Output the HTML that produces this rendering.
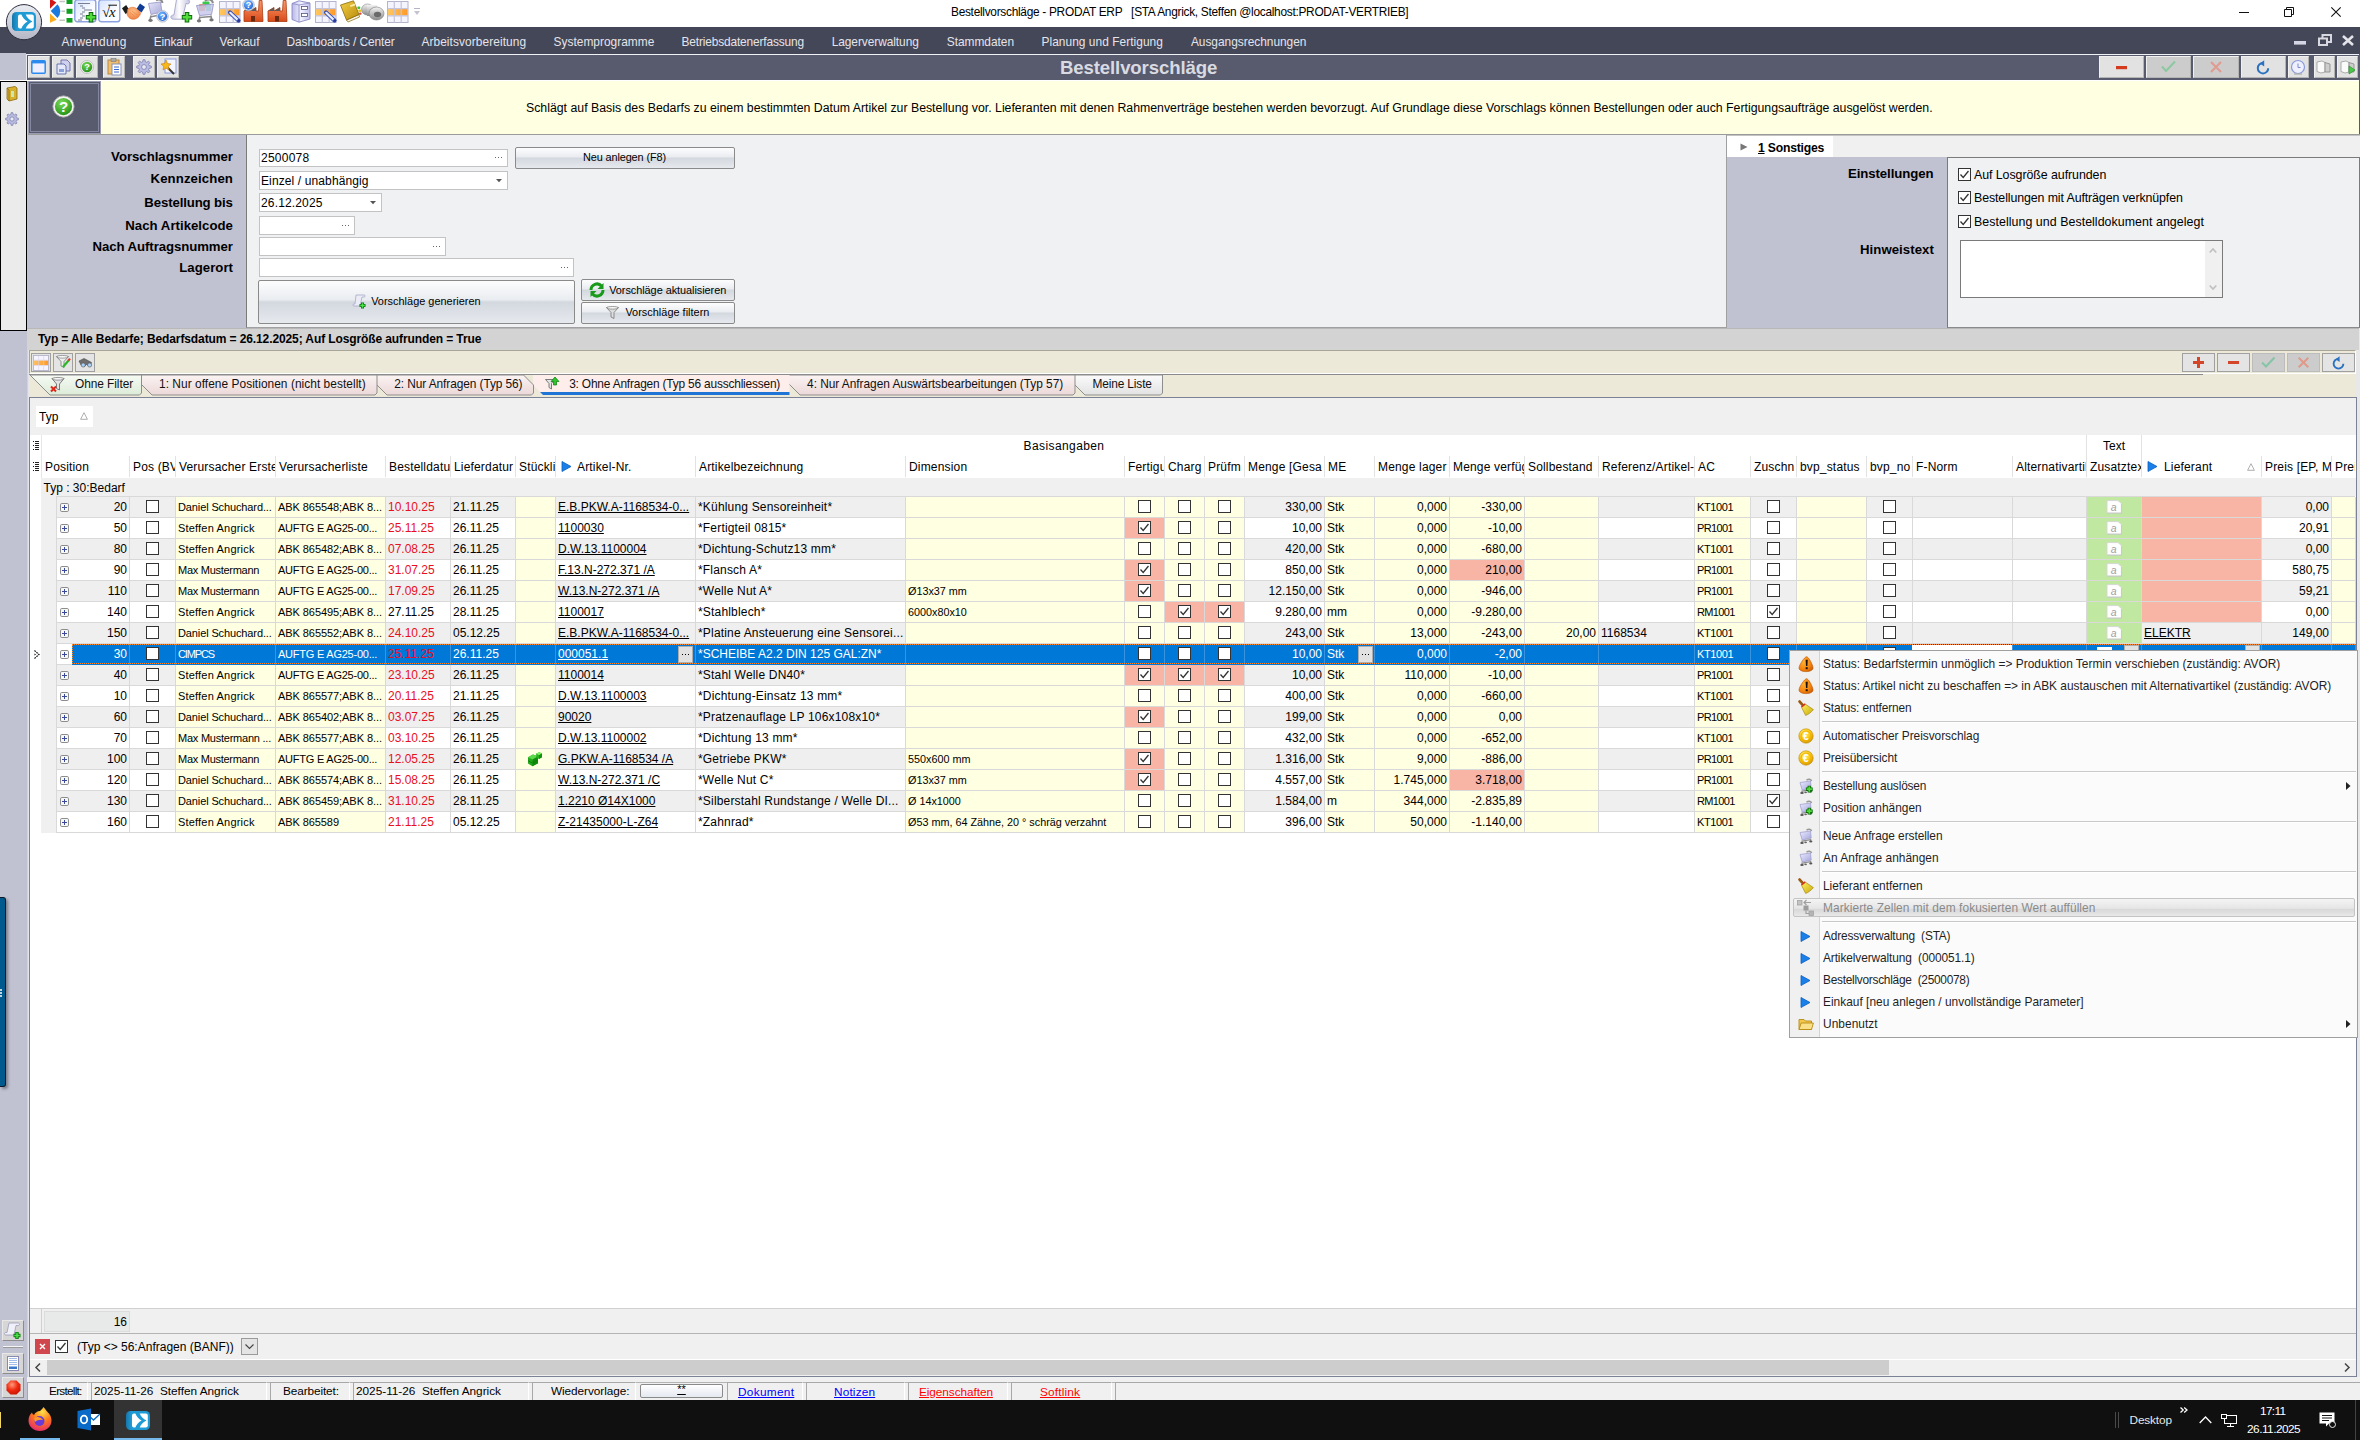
<!DOCTYPE html>
<html lang="de"><head><meta charset="utf-8"><title>Bestellvorschläge - PRODAT ERP</title>
<style>
html,body{margin:0;padding:0}
body{width:2360px;height:1440px;position:relative;overflow:hidden;background:#fff;
 font-family:"Liberation Sans",sans-serif;font-size:12px;color:#000}
body div{position:absolute;box-sizing:border-box;white-space:pre}
svg{position:absolute;overflow:visible}
.b{font-weight:bold}
.r{text-align:right}
.c{text-align:center}
.u{text-decoration:underline}
.mi{color:#e4e4ea;font-size:12.4px;height:27px;line-height:27px;top:28px}
.lbl{font-weight:bold;font-size:13.4px;text-align:right;height:20px;line-height:20px}
.inp{background:#fff;border:1px solid #c3c3c3;font-size:12px;line-height:16px;padding-left:2px}
.btn{border:1px solid #8a8a8a;border-radius:2px;background:linear-gradient(#fdfdfe 0%,#e9ecf0 45%,#d3d8df 50%,#e6e9ee 100%);font-size:11.4px;text-align:center}
.tb{background:#e2e2e2;border:1px solid #f0f0f0;border-right-color:#b4b4b4;border-bottom-color:#b4b4b4}
.tb2{background:#e4e4e4;border:1px solid #a0a0a0}
.hd{font-size:12px;letter-spacing:0.17px;height:21px;line-height:22px;top:456px;overflow:hidden;border-left:1px solid #e2e2e2;padding-left:3px;background:#fff}
.cell{height:21px;line-height:20px;overflow:hidden;border-right:1px solid #d9d9d9;border-bottom:1px solid #d9d9d9;font-size:12px;padding:0 2px 0 2px}
.sm{font-size:11px}
.cb{width:13px;height:13px;border:1px solid #333;background:#fff}
.mt{font-size:12.2px;color:#1f1f1f;height:22px;line-height:22px;left:1823px}
.sep{left:1822px;width:534px;height:1px;background:#c9c9c9;border-bottom:1px solid #fff;height:2px}
.st{font-size:11.6px;height:18px;line-height:18px;top:1382px}
.bz{letter-spacing:0.18px}
.dm{font-size:10.8px}

</style></head>
<body>
<div style="left:0px;top:0px;width:2360px;height:27px;background:#fff"></div>
<div style="left:951px;top:2.8px;height:18px;line-height:18px;font-size:11.9px;letter-spacing:-0.289px;">Bestellvorschläge - PRODAT ERP   [STA Angrick, Steffen @localhost:PRODAT-VERTRIEB]</div>
<svg style="left:2239px;top:12px" width="10" height="1" viewBox="0 0 10 1"><rect width="10" height="1" fill="#111"/></svg>
<svg style="left:2284px;top:7px" width="10" height="10" viewBox="0 0 10 10"><path d="M0.5 2.5 H7.5 V9.5 H0.5 Z M2.5 2.5 V0.5 H9.5 V7.5 H7.5" fill="none" stroke="#111" stroke-width="1"/></svg>
<svg style="left:2331px;top:7px" width="10" height="10" viewBox="0 0 10 10"><path d="M0.3 0.3 L9.7 9.7 M9.7 0.3 L0.3 9.7" stroke="#111" stroke-width="1.1"/></svg>
<svg style="left:50px;top:0px" width="23" height="23" viewBox="0 0 23 23"><path d="M0 -1.5 L6.3 2.4 L0 8.7 Z" fill="#d41818"/><path d="M0.7 11.1 L7.49 4.31 A9.6 9.6 0 0 1 7.49 17.89 Z" fill="#1a7ade"/><path d="M0 13.5 L6.6 19.8 L0 22.7 Z" fill="#ffab1e"/><path d="M9.5 1.5H15M11.5 11.2H15M9.5 20.3H15" stroke="#c4c4c4" stroke-width="1.6"/><rect x="16.5" y="-1" width="6" height="5" fill="#10a020"/><rect x="16.5" y="8.8" width="6" height="5" fill="#10a020"/><rect x="16.5" y="18" width="6" height="4.6" fill="#10a020"/></svg>
<svg style="left:74px;top:-1px" width="23" height="24" viewBox="0 0 23 24"><defs><linearGradient id="lb1" x1="0" y1="0" x2="1" y2="1"><stop offset="0" stop-color="#d4e2ff"/><stop offset="0.6" stop-color="#fafcff"/></linearGradient></defs><rect x="0.8" y="0.8" width="21" height="22" rx="2.5" fill="url(#lb1)" stroke="#8ea2e2" stroke-width="1.4"/><path d="M4 4.5H16M6 7H9M8 9H11M10 11H18M8 13H11M6 15H9M8 17H11M6 19H9M4 21H8" stroke="#6a7088" stroke-width="0.9"/><path d="M17 13.100000000000001V23.5M11.8 18.3H22.2" stroke="#0b6b0b" stroke-width="4.6"/><path d="M17 14.0V22.6M12.7 18.3H21.3" stroke="#52dc3c" stroke-width="2.6"/></svg>
<svg style="left:98px;top:-1px" width="23" height="24" viewBox="0 0 23 24"><rect x="0.8" y="0.8" width="21" height="22" rx="2.5" fill="url(#lb1)" stroke="#8ea2e2" stroke-width="1.4"/><text x="4" y="18" font-size="15" font-family="Liberation Serif,serif" fill="#111">√</text><text x="11" y="18" font-size="15" font-style="italic" font-family="Liberation Serif,serif" fill="#111">x</text><path d="M10.3 6.2H19" stroke="#111" stroke-width="1"/></svg>
<svg style="left:121px;top:3px" width="25" height="18" viewBox="0 0 25 18"><defs><radialGradient id="hs1" cx="0.45" cy="0.35" r="0.7"><stop offset="0" stop-color="#ffc08a"/><stop offset="1" stop-color="#ee7a3a"/></radialGradient></defs><path d="M1 5.2 L5.2 2 L9 8 L4.6 11 Z" fill="#1c1c1c"/><path d="M24 4 L19 0.6 L15.4 6 L20.6 9.6 Z" fill="#123c94"/><path d="M6.5 6.5 C9 3.5 13 3.8 15.5 5.5 L19.5 9.5 C20 12 17 15.5 13.5 16.2 C10 17 7 14.5 6 11.5 Z" fill="url(#hs1)" stroke="#d86a2a" stroke-width="0.5"/><path d="M9 9.5 L14 13.5 M11 8 L16 12" stroke="#e88848" stroke-width="0.8"/></svg>
<svg style="left:147px;top:-1px" width="24" height="24" viewBox="0 0 24 24"><defs><linearGradient id="ct1" x1="0" y1="0" x2="1" y2="1"><stop offset="0" stop-color="#e6e6fa"/><stop offset="1" stop-color="#a8a8d8"/></linearGradient><radialGradient id="qb1" cx="0.4" cy="0.3" r="0.8"><stop offset="0" stop-color="#7ab8ff"/><stop offset="1" stop-color="#1a62d0"/></radialGradient></defs><path d="M9 1.5 C12 -0.5 15 0.5 15.5 4" fill="none" stroke="#8c8c8c" stroke-width="2"/><path d="M1.5 4.5 L13.5 3 L15 13 L4 15.5 Z" fill="url(#ct1)" stroke="#9494c4" stroke-width="0.8"/><path d="M4 16.5 L3 21 M13 15 L12.5 19.5 M4 17.8 L13 16" stroke="#8a8a8a" stroke-width="1.6"/><ellipse cx="3.5" cy="21.5" rx="2.2" ry="1.4" fill="#777"/><circle cx="15.5" cy="17.3" r="5.8" fill="#dfe6f4" stroke="#a8acb8" stroke-width="0.7"/><circle cx="15.5" cy="17.3" r="4.7" fill="url(#qb1)"/><text x="15.5" y="20.6" font-size="9" font-weight="bold" fill="#fff" text-anchor="middle" font-family="Liberation Sans,sans-serif">?</text></svg>
<svg style="left:170px;top:-1px" width="24" height="24" viewBox="0 0 24 24"><defs><linearGradient id="sc1" x1="0" y1="0" x2="1" y2="0"><stop offset="0" stop-color="#c8c8e4"/><stop offset="0.45" stop-color="#ffffff"/><stop offset="1" stop-color="#c4c4e0"/></linearGradient></defs><path d="M6.5 0.5 H17 C19.5 0.5 20.5 3 18.8 4.5 C17.8 5.3 16.5 5 16.2 4 L13 16.5 C15 16.5 15.5 19.5 13 20.2 H3.5 C0.5 20.2 0 16.8 2.5 16.2 L4 15.8 Z" fill="url(#sc1)" stroke="#a4a4c8" stroke-width="0.9"/><path d="M17 13.100000000000001V23.5M11.8 18.3H22.2" stroke="#0b6b0b" stroke-width="4.6"/><path d="M17 14.0V22.6M12.7 18.3H21.3" stroke="#52dc3c" stroke-width="2.6"/></svg>
<svg style="left:195px;top:-1px" width="22" height="24" viewBox="0 0 22 24"><path d="M10 2 C13 -0.5 17 0 18 4" fill="none" stroke="#8c8c8c" stroke-width="2"/><rect x="7.5" y="2.5" width="7" height="6" rx="1" fill="#3cc84a"/><rect x="4" y="5" width="6" height="7" rx="1" fill="#f49a6a"/><rect x="11" y="5" width="5" height="7" fill="#7ad4b0"/><path d="M1.5 6.5 L18.5 5 L16.5 15.5 L4.5 16.5 Z" fill="#c4c4ea" fill-opacity="0.78" stroke="#9090c0" stroke-width="0.8"/><path d="M5 17.5 L4 21.5 M16 16.5 L16.5 20.5 M5 18.5 L16 17.5" stroke="#8a8a8a" stroke-width="1.7"/><ellipse cx="4" cy="22" rx="2.2" ry="1.4" fill="#777"/><ellipse cx="16.5" cy="21" rx="2.2" ry="1.4" fill="#777"/></svg>
<svg style="left:219px;top:1px" width="22" height="23" viewBox="0 0 22 23"><defs><linearGradient id="go219" x1="0" y1="0" x2="1" y2="0"><stop offset="0" stop-color="#ffc860"/><stop offset="1" stop-color="#ff9a28"/></linearGradient></defs><rect x="0.5" y="0.5" width="20.5" height="21" fill="#f4f4ff" stroke="#b4b4cc"/><rect x="1" y="8" width="19.5" height="6.5" fill="url(#go219)"/><path d="M7.3 0.5V21.5M14.2 0.5V21.5M0.5 7.6H21M0.5 14.8H21" stroke="#c4c4dc" stroke-width="1.2"/><path d="M11 11.5 L19.5 19.5" stroke="#3a52b8" stroke-width="4.2" stroke-linecap="round"/><path d="M11.3 11.8 L18.5 18.6" stroke="#e8eeff" stroke-width="2.2" stroke-linecap="round"/><circle cx="19.6" cy="19.6" r="1.5" fill="#2a3a9a"/></svg>
<svg style="left:242px;top:-1px" width="23" height="24" viewBox="0 0 23 24"><defs><linearGradient id="fc1" x1="0" y1="0" x2="0" y2="1"><stop offset="0" stop-color="#ff9a6a"/><stop offset="1" stop-color="#d84a1a"/></linearGradient></defs><path d="M2 22.5 V12 L8 8.5 V12 L14 8.5 V12 H16.5 L17.2 1.5 H20 L21 22.5 Z" fill="url(#fc1)" stroke="#a83a12" stroke-width="0.8"/><path d="M2 12 L8 8.5 L8 12 L14 8.5 L14 12 Z" fill="#5a5a5a"/><rect x="9" y="17" width="4" height="5.5" fill="#6a2a10"/><circle cx="6.5" cy="6" r="5.8" fill="#dfe6f4" stroke="#a8acb8" stroke-width="0.7"/><circle cx="6.5" cy="6" r="4.7" fill="url(#qb1)"/><text x="6.5" y="9.3" font-size="9" font-weight="bold" fill="#fff" text-anchor="middle" font-family="Liberation Sans,sans-serif">?</text></svg>
<svg style="left:266px;top:-1px" width="23" height="24" viewBox="0 0 23 24"><defs><linearGradient id="fc2" x1="0" y1="0" x2="0" y2="1"><stop offset="0" stop-color="#ff9a6a"/><stop offset="1" stop-color="#d84a1a"/></linearGradient></defs><path d="M2 22.5 V12 L8 8.5 V12 L14 8.5 V12 H16.5 L17.2 1.5 H20 L21 22.5 Z" fill="url(#fc2)" stroke="#a83a12" stroke-width="0.8"/><path d="M2 12 L8 8.5 L8 12 L14 8.5 L14 12 Z" fill="#5a5a5a"/><rect x="9" y="17" width="4" height="5.5" fill="#6a2a10"/></svg>
<svg style="left:291px;top:0px" width="21" height="23" viewBox="0 0 21 23"><defs><linearGradient id="cb1" x1="0" y1="0" x2="1" y2="0"><stop offset="0" stop-color="#b8b8e8"/><stop offset="0.5" stop-color="#f2f2ff"/><stop offset="1" stop-color="#c0c0ec"/></linearGradient></defs><path d="M1 3.5 L8 0.8 L19 3 V19 L8 22.2 L1 19.5 Z" fill="url(#cb1)" stroke="#8a8ac4" stroke-width="0.9"/><path d="M8 5 V22" stroke="#8a8ac4" stroke-width="0.8"/><path d="M1 3.5 L8 5 L19 3" fill="none" stroke="#8a8ac4" stroke-width="0.8"/><rect x="10.5" y="6.5" width="6" height="3" fill="#fff" stroke="#55557a" stroke-width="0.8"/><rect x="10.5" y="13.5" width="6" height="3" fill="#fff" stroke="#55557a" stroke-width="0.8"/></svg>
<svg style="left:315px;top:1px" width="22" height="23" viewBox="0 0 22 23"><defs><linearGradient id="go315" x1="0" y1="0" x2="1" y2="0"><stop offset="0" stop-color="#ffc860"/><stop offset="1" stop-color="#ff9a28"/></linearGradient></defs><rect x="0.5" y="0.5" width="20.5" height="21" fill="#f4f4ff" stroke="#b4b4cc"/><rect x="1" y="8" width="19.5" height="6.5" fill="url(#go315)"/><path d="M7.3 0.5V21.5M14.2 0.5V21.5M0.5 7.6H21M0.5 14.8H21" stroke="#c4c4dc" stroke-width="1.2"/><path d="M11 11.5 L19.5 19.5" stroke="#3a52b8" stroke-width="4.2" stroke-linecap="round"/><path d="M11.3 11.8 L18.5 18.6" stroke="#e8eeff" stroke-width="2.2" stroke-linecap="round"/><circle cx="19.6" cy="19.6" r="1.5" fill="#2a3a9a"/></svg>
<svg style="left:338px;top:0px" width="23" height="23" viewBox="0 0 23 23"><defs><linearGradient id="bk1" x1="0" y1="0" x2="1" y2="1"><stop offset="0" stop-color="#f4d048"/><stop offset="1" stop-color="#b88a08"/></linearGradient></defs><path d="M8.5 20 L10 22 L21.5 17 L21 14.5 Z" fill="#f8f4e0" stroke="#8a6a08" stroke-width="0.7"/><path d="M2.5 5 L15.5 0.8 L21 14.5 L8.5 20 Z" fill="url(#bk1)" stroke="#8a6a08" stroke-width="0.8"/><rect x="12" y="4.5" width="5" height="2" fill="#f8e8a0" transform="rotate(-18 14 5)"/><rect x="19.3" y="6.5" width="3" height="2.4" rx="1" fill="#3cc43c"/><rect x="20.2" y="9.6" width="3" height="2.4" rx="1" fill="#e8c020"/><rect x="21" y="12.6" width="2.6" height="2.2" rx="1" fill="#e04a3a"/></svg>
<svg style="left:361px;top:2px" width="24" height="20" viewBox="0 0 24 20"><defs><linearGradient id="pp1" x1="0" y1="0" x2="0" y2="1"><stop offset="0" stop-color="#f4f4f4"/><stop offset="1" stop-color="#8a8a8a"/></linearGradient></defs><ellipse cx="6.5" cy="7.5" rx="6" ry="5.5" fill="url(#pp1)" stroke="#8a8a8a" stroke-width="0.6"/><rect x="6" y="3" width="10" height="11" fill="url(#pp1)"/><ellipse cx="15.5" cy="11.5" rx="7.5" ry="6.5" fill="url(#pp1)" stroke="#7a7a7a" stroke-width="0.6"/><ellipse cx="16.5" cy="12.5" rx="3.6" ry="2.8" fill="#6a6a6a"/></svg>
<svg style="left:387px;top:1px" width="22" height="23" viewBox="0 0 22 23"><defs><linearGradient id="go387" x1="0" y1="0" x2="1" y2="0"><stop offset="0" stop-color="#ffc860"/><stop offset="1" stop-color="#ff9a28"/></linearGradient></defs><rect x="0.5" y="0.5" width="20.5" height="21" fill="#f4f4ff" stroke="#b4b4cc"/><rect x="1" y="8" width="19.5" height="6.5" fill="url(#go387)"/><path d="M7.3 0.5V21.5M14.2 0.5V21.5M0.5 7.6H21M0.5 14.8H21" stroke="#c4c4dc" stroke-width="1.2"/></svg>
<svg style="left:414px;top:8px" width="6" height="8" viewBox="0 0 6 8"><path d="M0 0.5H6" stroke="#b4b4c4"/><path d="M0 3 H6 L3 7 Z" fill="#c4c4d0"/></svg>
<div style="left:0px;top:27px;width:2360px;height:27px;background:#444757"></div>
<div style="left:61.5px;top:32.5px;height:18px;line-height:18px;font-size:11.9px;letter-spacing:0.242px;color:#e4e4ea;">Anwendung</div>
<div style="left:153.7px;top:32.5px;height:18px;line-height:18px;font-size:11.9px;letter-spacing:-0.166px;color:#e4e4ea;">Einkauf</div>
<div style="left:219.5px;top:32.5px;height:18px;line-height:18px;font-size:11.9px;letter-spacing:-0.059px;color:#e4e4ea;">Verkauf</div>
<div style="left:286.5px;top:32.5px;height:18px;line-height:18px;font-size:11.9px;letter-spacing:-0.084px;color:#e4e4ea;">Dashboards / Center</div>
<div style="left:421.4px;top:32.5px;height:18px;line-height:18px;font-size:11.9px;letter-spacing:0.089px;color:#e4e4ea;">Arbeitsvorbereitung</div>
<div style="left:553.6px;top:32.5px;height:18px;line-height:18px;font-size:11.9px;letter-spacing:0.020px;color:#e4e4ea;">Systemprogramme</div>
<div style="left:681.5px;top:32.5px;height:18px;line-height:18px;font-size:11.9px;letter-spacing:-0.143px;color:#e4e4ea;">Betriebsdatenerfassung</div>
<div style="left:831.7px;top:32.5px;height:18px;line-height:18px;font-size:11.9px;letter-spacing:-0.056px;color:#e4e4ea;">Lagerverwaltung</div>
<div style="left:946.8px;top:32.5px;height:18px;line-height:18px;font-size:11.9px;letter-spacing:-0.019px;color:#e4e4ea;">Stammdaten</div>
<div style="left:1041.5px;top:32.5px;height:18px;line-height:18px;font-size:11.9px;letter-spacing:0.054px;color:#e4e4ea;">Planung und Fertigung</div>
<div style="left:1190.9px;top:32.5px;height:18px;line-height:18px;font-size:11.9px;letter-spacing:-0.011px;color:#e4e4ea;">Ausgangsrechnungen</div>
<svg style="left:2294px;top:41px" width="12" height="4" viewBox="0 0 12 4"><rect width="12" height="3.6" fill="#d4d6e4"/></svg>
<svg style="left:2318px;top:34px" width="14" height="12" viewBox="0 0 14 12"><path d="M1 4.5 H9 V11 H1 Z" fill="none" stroke="#d8d8e0" stroke-width="2"/><path d="M4.5 4 V1 H13 V8 H9.5" fill="none" stroke="#d8d8e0" stroke-width="2"/></svg>
<svg style="left:2342px;top:35px" width="12" height="11" viewBox="0 0 12 11"><path d="M1 1 L11 10 M11 1 L1 10" stroke="#e4e4ea" stroke-width="2.6"/></svg>
<svg style="left:5px;top:3px" width="40" height="40" viewBox="0 0 40 40"><defs><linearGradient id="orb" x1="0" y1="0" x2="0" y2="1"><stop offset="0" stop-color="#eceef4"/><stop offset="0.5" stop-color="#cfd1dc"/><stop offset="1" stop-color="#b4b6c6"/></linearGradient><linearGradient id="orl" x1="0" y1="0" x2="1" y2="0"><stop offset="0" stop-color="#1874a8"/><stop offset="0.22" stop-color="#1e9ad4"/></linearGradient></defs><circle cx="19" cy="19.2" r="17.6" fill="url(#orb)" stroke="#2c2e3c" stroke-width="1"/><rect x="7" y="9" width="24" height="19" rx="4.5" fill="url(#orl)"/><rect x="13" y="11.6" width="15.8" height="13.8" rx="2" fill="#fff"/><path d="M16.2 11 H20.6 C21.5 14.5 24.5 17 27.5 18.5 C24.5 20 21.5 22.5 20.6 26 H16.2 C17.4 22.3 19.8 20 22.6 18.5 C19.8 17 17.4 14.7 16.2 11 Z" fill="#1e9ad4"/></svg>
<div style="left:0px;top:54px;width:2360px;height:26px;background:#585b6d;border-top:1px solid #f0f0f6"></div>
<div style="left:0px;top:53px;width:26px;height:27px;background:#c0c1d1"></div>
<div style="left:26px;top:54px;width:1px;height:26px;background:#e8e8ee"></div>
<div class="tb" style="left:28px;top:56px;width:22px;height:22px;"></div>
<div class="tb" style="left:52px;top:56px;width:22px;height:22px;"></div>
<div class="tb" style="left:76px;top:56px;width:22px;height:22px;"></div>
<div class="tb" style="left:103px;top:56px;width:22px;height:22px;"></div>
<div class="tb" style="left:133px;top:56px;width:22px;height:22px;"></div>
<div class="tb" style="left:157px;top:56px;width:22px;height:22px;"></div>
<svg style="left:31px;top:60px" width="15" height="14" viewBox="0 0 15 14"><rect x="0.8" y="0.8" width="13.4" height="12.4" rx="1" fill="#eef" stroke="#2a8af0" stroke-width="1.5"/><rect x="1" y="1" width="13" height="2.4" fill="#2a8af0"/></svg>
<svg style="left:56px;top:59px" width="15" height="16" viewBox="0 0 15 16"><path d="M5 1 H11 L14 4 V12 H5 Z" fill="#cfcfee" stroke="#6a6aa8" stroke-width="0.9"/><path d="M1 5 H8 L10 7 V15 H1 Z" fill="#e4e8f8" stroke="#5a6aa8" stroke-width="0.9"/><rect x="3" y="10" width="5" height="3" fill="#8aa0d8"/></svg>
<svg style="left:80px;top:60px" width="14" height="14" viewBox="0 0 16 16"><defs><radialGradient id="gh620" cx="0.4" cy="0.3" r="0.8"><stop offset="0" stop-color="#7ddc5a"/><stop offset="1" stop-color="#1d8a12"/></radialGradient></defs><circle cx="8" cy="8" r="7.4" fill="#f4f4f4" stroke="#9a9a9a" stroke-width="0.6"/><circle cx="8" cy="8" r="6" fill="url(#gh620)"/><text x="8" y="11.6" font-size="10.5" font-weight="bold" fill="#fff" text-anchor="middle" font-family="Liberation Sans,sans-serif">?</text></svg>
<svg style="left:107px;top:58px" width="15" height="18" viewBox="0 0 15 18"><rect x="1" y="2" width="11" height="14" fill="#f0c070" stroke="#b8863a"/><rect x="4" y="0.5" width="5" height="3" fill="#aaa" stroke="#777" stroke-width="0.6"/><rect x="5" y="6" width="9" height="11" fill="#fff" stroke="#8890b0"/><path d="M7 9H12M7 11.5H12M7 14H12" stroke="#3a6ad0" stroke-width="1"/></svg>
<svg style="left:136px;top:59px" width="16" height="16" viewBox="0 0 16 16"><path d="M15.35 7.13 L15.35 8.87 L13.10 9.44 L12.62 10.59 L13.81 12.58 L12.58 13.81 L10.59 12.62 L9.44 13.10 L8.87 15.35 L7.13 15.35 L6.56 13.10 L5.41 12.62 L3.42 13.81 L2.19 12.58 L3.38 10.59 L2.90 9.44 L0.65 8.87 L0.65 7.13 L2.90 6.56 L3.38 5.41 L2.19 3.42 L3.42 2.19 L5.41 3.38 L6.56 2.90 L7.13 0.65 L8.87 0.65 L9.44 2.90 L10.59 3.38 L12.58 2.19 L13.81 3.42 L12.62 5.41 L13.10 6.56 Z" fill="#b9bbe0" stroke="#7a7cae" stroke-width="0.8"/><circle cx="8" cy="8" r="2.4" fill="#e9e9f4" stroke="#7a7cae" stroke-width="0.8"/></svg>
<svg style="left:160px;top:58px" width="17" height="18" viewBox="0 0 17 18"><rect x="5" y="1" width="11" height="14" fill="#f4f6ff" stroke="#8a9ad8"/><path d="M6 8 L14 16" stroke="#333" stroke-width="2"/><path d="M6 2 L7.5 5.5 L11 6 L8.3 8.3 L9 12 L6 10 L3 12 L3.7 8.3 L1 6 L4.5 5.5 Z" fill="#f8b818" stroke="#c87808" stroke-width="0.6"/></svg>
<div style="left:1060px;top:55.5px;height:24px;line-height:24px;font-weight:bold;font-size:18.6px;letter-spacing:-0.119px;color:#d9dae2;">Bestellvorschläge</div>
<div class="tb" style="left:2099px;top:56px;width:45px;height:22px;background:#e2e2e2"></div>
<div class="tb" style="left:2146px;top:56px;width:45px;height:22px;background:#cccccc"></div>
<div class="tb" style="left:2193px;top:56px;width:46px;height:22px;background:#cccccc"></div>
<div class="tb" style="left:2241px;top:56px;width:45px;height:22px;background:#e2e2e2"></div>
<div class="tb" style="left:2288px;top:56px;width:21px;height:22px;background:#e2e2e2"></div>
<div class="tb" style="left:2314px;top:56px;width:21px;height:22px;background:#e2e2e2"></div>
<div class="tb" style="left:2337px;top:56px;width:21px;height:22px;background:#e2e2e2"></div>
<svg style="left:2116px;top:66px" width="11" height="4" viewBox="0 0 11 4"><rect width="11" height="3.2" fill="#d43a1e"/></svg>
<svg style="left:2161px;top:60px" width="15" height="13" viewBox="0 0 15 13"><path d="M1 6.5 L5 11 L14 1.5" fill="none" stroke="#8cc8a0" stroke-width="2"/></svg>
<svg style="left:2210px;top:61px" width="12" height="12" viewBox="0 0 12 12"><path d="M1 1 L11 11 M11 1 L1 11" stroke="#e09a90" stroke-width="2"/></svg>
<svg style="left:2255px;top:60px" width="16" height="16" viewBox="0 0 16 16"><path d="M8 3 A5.2 5.2 0 1 0 13.2 8.2" fill="none" stroke="#2a72c0" stroke-width="2"/><path d="M4.8 3.4 L9.2 0.2 L9.2 6.4 Z" fill="#2a72c0"/></svg>
<svg style="left:2290px;top:59px" width="16" height="16" viewBox="0 0 16 16"><circle cx="8" cy="8" r="6.5" fill="#eef0ff" stroke="#8a9ad8" stroke-width="1.2"/><path d="M8 4.5V8.5H10.5" fill="none" stroke="#7a8ac8" stroke-width="1"/><path d="M4 15 H12" stroke="#aaa" stroke-width="1.2"/></svg>
<svg style="left:2316px;top:60px" width="16" height="14" viewBox="0 0 16 14"><path d="M1 2 L6 1 L9 2.5 V12 L5 13 L1 11.5 Z" fill="#fafafa" stroke="#999" stroke-width="0.8"/><path d="M9 2.5 L14 4 V12 L9 12 Z" fill="#ccc" stroke="#888" stroke-width="0.8"/></svg>
<svg style="left:2340px;top:60px" width="16" height="14" viewBox="0 0 16 14"><path d="M1 2 L6 1 L9 2.5 V12 L5 13 L1 11.5 Z" fill="#fafafa" stroke="#999" stroke-width="0.8"/><path d="M9 2.5 L14 4 V12 L9 12 Z" fill="#ccc" stroke="#888" stroke-width="0.8"/><path d="M9 6 L15 10 L9 14 Z" fill="#4ac84a" stroke="#1a8a1a" stroke-width="0.6"/></svg>
<div style="left:0px;top:81px;width:28px;height:1360px;background:#c0c1d1"></div>
<div style="left:0px;top:81px;width:27px;height:250px;background:#ebebeb;border:1px solid #000"></div>
<svg style="left:6px;top:86px" width="13" height="16" viewBox="0 0 13 16"><path d="M1 2 L9 0.5 L11 2 V13 L3 15 L1 13 Z" fill="#d8b030" stroke="#8a6a10" stroke-width="0.8"/><path d="M1 2 L3 4 V15" fill="none" stroke="#8a6a10" stroke-width="0.8"/><rect x="5" y="5" width="3" height="6" fill="#c8e8b0"/></svg>
<svg style="left:5px;top:112px" width="14" height="14" viewBox="0 0 16 16"><path d="M15.35 7.13 L15.35 8.87 L13.10 9.44 L12.62 10.59 L13.81 12.58 L12.58 13.81 L10.59 12.62 L9.44 13.10 L8.87 15.35 L7.13 15.35 L6.56 13.10 L5.41 12.62 L3.42 13.81 L2.19 12.58 L3.38 10.59 L2.90 9.44 L0.65 8.87 L0.65 7.13 L2.90 6.56 L3.38 5.41 L2.19 3.42 L3.42 2.19 L5.41 3.38 L6.56 2.90 L7.13 0.65 L8.87 0.65 L9.44 2.90 L10.59 3.38 L12.58 2.19 L13.81 3.42 L12.62 5.41 L13.10 6.56 Z" fill="#b9bbe0" stroke="#7a7cae" stroke-width="0.8"/><circle cx="8" cy="8" r="2.4" fill="#e9e9f4" stroke="#7a7cae" stroke-width="0.8"/></svg>
<div style="left:26px;top:80px;width:2334px;height:1px;background:#fff"></div>
<div style="left:28px;top:81px;width:2331px;height:53px;background:#ffffe1"></div>
<div style="left:2359px;top:54px;width:1px;height:80px;background:#585b6d"></div>
<div style="left:28px;top:134px;width:2332px;height:1px;background:#a8a8a8"></div>
<div style="left:28px;top:81px;width:73px;height:53px;background:#585b6d;border:1px solid #9a9cb0;box-shadow:inset 0 0 0 1px #585b6d, inset 0 0 0 2px #8587a0"></div>
<svg style="left:51.5px;top:95px" width="23" height="23" viewBox="0 0 16 16"><defs><radialGradient id="gh455" cx="0.4" cy="0.3" r="0.8"><stop offset="0" stop-color="#7ddc5a"/><stop offset="1" stop-color="#1d8a12"/></radialGradient></defs><circle cx="8" cy="8" r="7.4" fill="#f4f4f4" stroke="#9a9a9a" stroke-width="0.6"/><circle cx="8" cy="8" r="6" fill="url(#gh455)"/><text x="8" y="11.6" font-size="10.5" font-weight="bold" fill="#fff" text-anchor="middle" font-family="Liberation Sans,sans-serif">?</text></svg>
<div style="left:526px;top:99px;height:18px;line-height:18px;font-size:12.3px;letter-spacing:0.002px;">Schlägt auf Basis des Bedarfs zu einem bestimmten Datum Artikel zur Bestellung vor. Lieferanten mit denen Rahmenverträge bestehen werden bevorzugt. Auf Grundlage diese Vorschlags können Bestellungen oder auch Fertigungsaufträge ausgelöst werden.</div>
<div style="left:28px;top:134px;width:219px;height:194px;background:#c0c1d1"></div>
<div style="left:246px;top:134px;width:1481px;height:194px;background:#f0f1f3;border:1px solid #7a7a7a;border-right-color:#a0a0a0;border-bottom-color:#a0a0a0"></div>
<div style="left:111.1px;top:146.5px;height:20px;line-height:20px;font-weight:bold;font-size:13.2px;letter-spacing:-0.024px;">Vorschlagsnummer</div>
<div style="left:150.5px;top:169px;height:20px;line-height:20px;font-weight:bold;font-size:13.2px;letter-spacing:0.108px;">Kennzeichen</div>
<div style="left:144.3px;top:192.5px;height:20px;line-height:20px;font-weight:bold;font-size:13.2px;letter-spacing:-0.117px;">Bestellung bis</div>
<div style="left:125.3px;top:215.5px;height:20px;line-height:20px;font-weight:bold;font-size:13.2px;letter-spacing:0.023px;">Nach Artikelcode</div>
<div style="left:92.5px;top:236.5px;height:20px;line-height:20px;font-weight:bold;font-size:13.2px;letter-spacing:-0.073px;">Nach Auftragsnummer</div>
<div style="left:179.3px;top:257.5px;height:20px;line-height:20px;font-weight:bold;font-size:13.2px;letter-spacing:0.022px;">Lagerort</div>
<div class="inp" style="left:259px;top:149px;width:249px;height:18px;"></div>
<div style="left:261px;top:148.5px;height:18px;line-height:18px;font-size:12px;letter-spacing:0.247px;">2500078</div>
<svg style="left:495px;top:157px" width="7" height="2" viewBox="0 0 7 2"><rect x="0" width="1" height="1" fill="#666"/><rect x="3" width="1" height="1" fill="#666"/><rect x="6" width="1" height="1" fill="#666"/></svg>
<div class="inp" style="left:259px;top:171px;width:249px;height:19px;"></div>
<div style="left:261px;top:171.5px;height:18px;line-height:18px;font-size:12px;letter-spacing:0.116px;">Einzel / unabhängig</div>
<svg style="left:496px;top:179px" width="6" height="3" viewBox="0 0 6 3"><path d="M0 0 H6 L3 3.2 Z" fill="#555"/></svg>
<div class="inp" style="left:259px;top:193px;width:123px;height:19px;"></div>
<div style="left:261px;top:193.5px;height:18px;line-height:18px;font-size:12px;letter-spacing:0.149px;">26.12.2025</div>
<svg style="left:370px;top:201px" width="6" height="3" viewBox="0 0 6 3"><path d="M0 0 H6 L3 3.2 Z" fill="#555"/></svg>
<div class="inp" style="left:259px;top:216px;width:96px;height:19px"></div>
<svg style="left:342px;top:225px" width="7" height="2" viewBox="0 0 7 2"><rect x="0" width="1" height="1" fill="#666"/><rect x="3" width="1" height="1" fill="#666"/><rect x="6" width="1" height="1" fill="#666"/></svg>
<div class="inp" style="left:259px;top:237px;width:187px;height:19px"></div>
<svg style="left:433px;top:246px" width="7" height="2" viewBox="0 0 7 2"><rect x="0" width="1" height="1" fill="#666"/><rect x="3" width="1" height="1" fill="#666"/><rect x="6" width="1" height="1" fill="#666"/></svg>
<div class="inp" style="left:259px;top:258px;width:315px;height:19px"></div>
<svg style="left:561px;top:267px" width="7" height="2" viewBox="0 0 7 2"><rect x="0" width="1" height="1" fill="#666"/><rect x="3" width="1" height="1" fill="#666"/><rect x="6" width="1" height="1" fill="#666"/></svg>
<div class="btn" style="left:515px;top:147px;width:220px;height:22px;"></div>
<div style="left:583px;top:147.7px;height:18px;line-height:18px;font-size:10.9px;letter-spacing:-0.115px;">Neu anlegen (F8)</div>
<div class="btn" style="left:258px;top:280px;width:317px;height:44px;"></div>
<div style="left:371.2px;top:291.8px;height:18px;line-height:18px;font-size:10.9px;letter-spacing:0.021px;">Vorschläge generieren</div>
<svg style="left:352px;top:294px" width="15" height="15" viewBox="0 0 15 15"><path d="M4 1 H12 C13.5 1 13.5 3 12 3 H10 L8 12 H2 C0.5 12 0.5 10 2 10 H3 Z" fill="#ececf6" stroke="#a8a8c8" stroke-width="0.8"/><path d="M10.5 8.5V14.5M7.5 11.5H13.5" stroke="#0a7a0a" stroke-width="3"/><path d="M10.5 9.3V13.7M8.3 11.5H12.7" stroke="#4ee04e" stroke-width="1.3"/></svg>
<div class="btn" style="left:581px;top:279px;width:154px;height:22px;"></div>
<div style="left:609.2px;top:280.8px;height:18px;line-height:18px;font-size:10.9px;letter-spacing:-0.042px;">Vorschläge aktualisieren</div>
<svg style="left:589px;top:282px" width="16" height="16" viewBox="0 0 16 16"><path d="M2 8 A6 6 0 0 1 12.5 4" fill="none" stroke="#1a9a1a" stroke-width="3"/><path d="M14.5 1 V7 H8.5 Z" fill="#1a9a1a"/><path d="M14 8 A6 6 0 0 1 3.5 12" fill="none" stroke="#1a9a1a" stroke-width="3"/><path d="M1.5 15 V9 H7.5 Z" fill="#1a9a1a"/></svg>
<div class="btn" style="left:581px;top:302px;width:154px;height:22px;"></div>
<div style="left:625.4px;top:302.8px;height:18px;line-height:18px;font-size:10.9px;letter-spacing:0.028px;">Vorschläge filtern</div>
<svg style="left:606px;top:306px" width="13" height="14" viewBox="0 0 13 14"><path d="M0.5 1.5 H12.5 L8 6.5 V12.5 L5 11 V6.5 Z" fill="#ddd" stroke="#777" stroke-width="0.8"/><ellipse cx="6.5" cy="1.8" rx="6" ry="1.3" fill="#f6f6f6" stroke="#777" stroke-width="0.7"/></svg>
<div style="left:1727px;top:134px;width:633px;height:23px;background:#f0f0f0"></div>
<div style="left:1727px;top:136px;width:106px;height:21px;background:#fff"></div>
<svg style="left:1740px;top:143px" width="8" height="8" viewBox="0 0 8 8"><path d="M0.5 0.5 L7.5 4 L0.5 7.5 Z" fill="#777"/></svg>
<div class="b" style="left:1758px;top:138.5px;height:18px;line-height:18px;font-size:12.2px;letter-spacing:-0.208px;"><span class="u">1</span> Sonstiges</div>
<div style="left:1727px;top:157px;width:221px;height:171px;background:#c0c1d1"></div>
<div style="left:1947px;top:157px;width:413px;height:171px;background:#f0f1f3;border:1px solid #7a7a7a;border-bottom-color:#8a8a8a"></div>
<div style="left:1848px;top:163.5px;height:20px;line-height:20px;font-weight:bold;font-size:13.2px;letter-spacing:-0.079px;">Einstellungen</div>
<div style="left:1860px;top:239.5px;height:20px;line-height:20px;font-weight:bold;font-size:13.2px;letter-spacing:0.054px;">Hinweistext</div>
<div class="cb" style="left:1958px;top:168px;border-color:#333"></div>
<svg style="left:1958px;top:168px" width="13" height="13" viewBox="0 0 13 13"><path d="M2.5 6.5 L5.2 9.5 L10.5 3" fill="none" stroke="#333" stroke-width="1.3"/></svg>
<div style="left:1974px;top:166px;height:18px;line-height:18px;font-size:12.4px;letter-spacing:-0.064px;">Auf Losgröße aufrunden</div>
<div class="cb" style="left:1958px;top:191px;border-color:#333"></div>
<svg style="left:1958px;top:191px" width="13" height="13" viewBox="0 0 13 13"><path d="M2.5 6.5 L5.2 9.5 L10.5 3" fill="none" stroke="#333" stroke-width="1.3"/></svg>
<div style="left:1974px;top:189px;height:18px;line-height:18px;font-size:12.4px;letter-spacing:-0.111px;">Bestellungen mit Aufträgen verknüpfen</div>
<div class="cb" style="left:1958px;top:215px;border-color:#333"></div>
<svg style="left:1958px;top:215px" width="13" height="13" viewBox="0 0 13 13"><path d="M2.5 6.5 L5.2 9.5 L10.5 3" fill="none" stroke="#333" stroke-width="1.3"/></svg>
<div style="left:1974px;top:213px;height:18px;line-height:18px;font-size:12.4px;letter-spacing:0.048px;">Bestellung und Bestelldokument angelegt</div>
<div style="left:1960px;top:240px;width:263px;height:58px;background:#fff;border:1px solid #7a7a7a"></div>
<div style="left:2205px;top:241px;width:17px;height:56px;background:#f0f0f0"></div>
<svg style="left:2209px;top:248px" width="8" height="5" viewBox="0 0 8 5"><path d="M0.7 4.5 L4 1 L7.3 4.5" fill="none" stroke="#c0c0c0" stroke-width="1.7"/></svg>
<svg style="left:2209px;top:285px" width="8" height="5" viewBox="0 0 8 5"><path d="M0.7 0.5 L4 4 L7.3 0.5" fill="none" stroke="#c0c0c0" stroke-width="1.7"/></svg>
<div style="left:27px;top:328px;width:2332px;height:22px;background:#d3d3d3;border-top:1px solid #b8b8b8"></div>
<div style="left:2359px;top:328px;width:1px;height:22px;background:#e8e8e8"></div>
<div style="left:38px;top:329px;height:20px;line-height:20px;font-weight:bold;font-size:12px;letter-spacing:-0.106px;">Typ = Alle Bedarfe; Bedarfsdatum = 26.12.2025; Auf Losgröße aufrunden = True</div>
<div style="left:28px;top:350px;width:2329px;height:48px;background:#ece9d8"></div>
<div style="left:29px;top:350px;width:2327px;height:24px;border-top:1px solid #a8a698;border-left:1px solid #a8a698;border-right:1px solid #fff;border-bottom:1px solid #fff"></div>
<div style="left:2356px;top:350px;width:4px;height:1030px;background:#e8e8e8"></div>
<div class="tb2" style="left:31px;top:353px;width:20px;height:19px;"></div>
<div class="tb2" style="left:53px;top:353px;width:20px;height:19px;"></div>
<div class="tb2" style="left:75px;top:353px;width:20px;height:19px;"></div>
<svg style="left:33px;top:355px" width="16" height="16" viewBox="0 0 18 18"><defs><linearGradient id="ig454" x1="0" y1="0" x2="1" y2="0"><stop offset="0" stop-color="#ffc060"/><stop offset="1" stop-color="#ff9a28"/></linearGradient></defs><rect x="0.5" y="0.5" width="17" height="17" fill="#f6f4ff" stroke="#b4b4c8"/><rect x="1" y="6" width="16" height="5.6" fill="url(#ig454)"/><path d="M6.3 1V17M12 1V17" stroke="#d8d4ec" stroke-width="1" stroke-opacity="0.75"/><path d="M1 5.8H17M1 11.8H17" stroke="#dcd8f0" stroke-width="0.8"/></svg>
<svg style="left:56px;top:355px" width="15" height="15" viewBox="0 0 15 15"><path d="M0.5 1.5 H12.5 L8 6.5 V12.5 L5 11 V6.5 Z" fill="#eee" stroke="#777" stroke-width="0.8"/><ellipse cx="6.5" cy="1.8" rx="6" ry="1.3" fill="#fafafa" stroke="#777" stroke-width="0.7"/><path d="M7 12 L13 5" stroke="#2ab82a" stroke-width="2.2"/><path d="M12.4 5.6 L14 3.6" stroke="#e03a2a" stroke-width="2.2"/></svg>
<svg style="left:78px;top:357px" width="15" height="11" viewBox="0 0 15 11"><path d="M1 4 L6 1.5 L9 3 L13.5 5.5 L12 9.5 L8.5 7.5 L6.5 9.5 L3 8 Z" fill="#6e6e6e" stroke="#4a4a4a" stroke-width="0.6"/><circle cx="5.2" cy="8" r="2.1" fill="#a8d0f8" stroke="#5a5a5a" stroke-width="0.6"/><circle cx="11.6" cy="8" r="2.1" fill="#a8d0f8" stroke="#5a5a5a" stroke-width="0.6"/></svg>
<div class="tb2" style="left:2182px;top:353px;width:33px;height:19px;background:#e4e4e4;border-color:#a0a0a0"></div>
<div class="tb2" style="left:2217px;top:353px;width:33px;height:19px;background:#e4e4e4;border-color:#a0a0a0"></div>
<div class="tb2" style="left:2252px;top:353px;width:33px;height:19px;background:#cccccc;border-color:#bcbcbc"></div>
<div class="tb2" style="left:2287px;top:353px;width:33px;height:19px;background:#cccccc;border-color:#bcbcbc"></div>
<div class="tb2" style="left:2322px;top:353px;width:33px;height:19px;background:#e4e4e4;border-color:#a0a0a0"></div>
<svg style="left:2193px;top:357px" width="11" height="11" viewBox="0 0 11 11"><path d="M5.5 0V11M0 5.5H11" stroke="#d4452a" stroke-width="3"/></svg>
<svg style="left:2228px;top:361px" width="11" height="3" viewBox="0 0 11 3"><rect width="11" height="3" fill="#d4452a"/></svg>
<svg style="left:2261px;top:356px" width="14" height="12" viewBox="0 0 14 12"><path d="M1 6.5 L5 10.5 L13.5 1.5" fill="none" stroke="#86c4a6" stroke-width="2"/></svg>
<svg style="left:2298px;top:357px" width="11" height="11" viewBox="0 0 11 11"><path d="M0.7 0.7 L10.3 10.3 M10.3 0.7 L0.7 10.3" stroke="#e09a8a" stroke-width="2"/></svg>
<svg style="left:2331px;top:356px" width="15" height="15" viewBox="0 0 16 16"><path d="M8 3 A5.2 5.2 0 1 0 13.2 8.2" fill="none" stroke="#2a72c0" stroke-width="2"/><path d="M4.8 3.4 L9.2 0.2 L9.2 6.4 Z" fill="#2a72c0"/></svg>
<div style="left:29px;top:374px;width:2174px;height:1px;background:#8a8a8a"></div>
<svg style="left:1065px;top:375px" width="97.5" height="20" viewBox="0 0 97.5 20"><defs><linearGradient id="tg1075" x1="0" y1="0" x2="0" y2="1"><stop offset="0" stop-color="#fbfbfb"/><stop offset="1" stop-color="#e2e2e2"/></linearGradient></defs><polygon points="0,0 97.5,0 97.5,18 95.5,20 20,20" fill="url(#tg1075)" stroke="#8e8e8e" stroke-width="1"/></svg>
<div style="left:1092.4px;top:374.6px;height:18px;line-height:18px;font-size:11.9px;letter-spacing:-0.126px;color:#111;">Meine Liste</div>
<svg style="left:779.5px;top:375px" width="295.0" height="20" viewBox="0 0 295.0 20"><defs><linearGradient id="tg789.5" x1="0" y1="0" x2="0" y2="1"><stop offset="0" stop-color="#fbf3f3"/><stop offset="1" stop-color="#ecd8d8"/></linearGradient></defs><polygon points="0,0 295.0,0 295.0,18 293.0,20 20,20" fill="url(#tg789.5)" stroke="#8e8e8e" stroke-width="1"/></svg>
<div style="left:807.1px;top:374.6px;height:18px;line-height:18px;font-size:11.9px;letter-spacing:-0.038px;color:#111;">4: Nur Anfragen Auswärtsbearbeitungen (Typ 57)</div>
<svg style="left:523px;top:375px" width="266.5" height="20" viewBox="0 0 266.5 20"><polygon points="10,0 266.5,0 266.5,20 20,20 10,10" fill="#fdeeec"/></svg>
<svg style="left:523px;top:375px" width="266.5" height="20" viewBox="0 0 266.5 20"><polygon points="17,17 266.5,17 266.5,20 20,20" fill="#1f74d6"/></svg>
<div style="left:569.2px;top:374.6px;height:18px;line-height:18px;font-size:11.9px;letter-spacing:-0.184px;color:#111;">3: Ohne Anfragen (Typ 56 ausschliessen)</div>
<svg style="left:366.5px;top:375px" width="166.5" height="20" viewBox="0 0 166.5 20"><defs><linearGradient id="tg376.5" x1="0" y1="0" x2="0" y2="1"><stop offset="0" stop-color="#fbf3f3"/><stop offset="1" stop-color="#ecd8d8"/></linearGradient></defs><polygon points="0,0 156.5,0 166.5,10 166.5,18 164.5,20 20,20" fill="url(#tg376.5)" stroke="#8e8e8e" stroke-width="1"/></svg>
<div style="left:394.2px;top:374.6px;height:18px;line-height:18px;font-size:11.9px;letter-spacing:-0.079px;color:#111;">2: Nur Anfragen (Typ 56)</div>
<svg style="left:131.5px;top:375px" width="245.0" height="20" viewBox="0 0 245.0 20"><defs><linearGradient id="tg141.5" x1="0" y1="0" x2="0" y2="1"><stop offset="0" stop-color="#fbf3f3"/><stop offset="1" stop-color="#ecd8d8"/></linearGradient></defs><polygon points="0,0 245.0,0 245.0,18 243.0,20 20,20" fill="url(#tg141.5)" stroke="#8e8e8e" stroke-width="1"/></svg>
<div style="left:159px;top:374.6px;height:18px;line-height:18px;font-size:11.9px;letter-spacing:0.049px;color:#111;">1: Nur offene Positionen (nicht bestellt)</div>
<svg style="left:30px;top:375px" width="111.5" height="20" viewBox="0 0 111.5 20"><defs><linearGradient id="tg30" x1="0" y1="0" x2="0" y2="1"><stop offset="0" stop-color="#f6fbf4"/><stop offset="1" stop-color="#dcebd8"/></linearGradient></defs><polygon points="0,0 111.5,0 111.5,18 109.5,20 20,20" fill="url(#tg30)" stroke="#8e8e8e" stroke-width="1"/></svg>
<div style="left:75px;top:374.6px;height:18px;line-height:18px;font-size:11.9px;letter-spacing:-0.066px;color:#111;">Ohne Filter</div>
<svg style="left:50px;top:377px" width="16" height="16" viewBox="0 0 16 16"><path d="M2 1.5 H14 L9.5 7 V13 L6.5 11.5 V7 Z" fill="#e4e4e4" stroke="#6e6e6e" stroke-width="0.9"/><ellipse cx="8" cy="1.8" rx="6" ry="1.3" fill="#fafafa" stroke="#6e6e6e" stroke-width="0.7"/><path d="M1 9.5 L6 14.5 M6 9.5 L1 14.5" stroke="#e0281a" stroke-width="2"/></svg>
<svg style="left:545px;top:376px" width="16" height="16" viewBox="0 0 16 16"><path d="M0.5 3.5 H9.5 L6.5 7.5 V13 L4 11.5 V7.5 Z" fill="#e4e4e4" stroke="#6e6e6e" stroke-width="0.9"/><path d="M10 1 L14 5.5 H11.5 V9 H8.5 V5.5 H6 Z" fill="#2ec42e" stroke="#0a7a0a" stroke-width="0.7"/></svg>
<div style="left:28px;top:134px;width:2332px;height:1px;background:#9a9a9a"></div>
<div style="left:1727px;top:135px;width:633px;height:1px;background:#c4c4c4"></div>
<div style="left:29px;top:397px;width:2328px;height:980px;background:#fff;border:1px solid #7c8296"></div>
<div style="left:30px;top:398px;width:2326px;height:37px;background:#f0f0f0"></div>
<div style="left:36px;top:406px;width:57px;height:21px;background:#fff"></div>
<div style="left:39px;top:407px;height:21px;line-height:21px;font-size:12px">Typ</div>
<svg style="left:80px;top:412px" width="8" height="8" viewBox="0 0 8 8"><path d="M4 0.7 L7.4 7.3 H0.6 Z" fill="none" stroke="#9a9a9a" stroke-width="0.8"/></svg>
<div style="left:30px;top:435px;width:12px;height:62px;background:#fff"></div>
<div style="left:42px;top:435px;width:2314px;height:43px;background:#fff"></div>
<svg style="left:33px;top:441px" width="6" height="9" viewBox="0 0 6 9"><path d="M0 0.5H1M0 4.5H1M0 8.5H1" stroke="#111" stroke-width="1"/><path d="M2 0.5H6M2 2.5H6M2 4.5H6M2 6.5H6M2 8.5H6" stroke="#222" stroke-width="1"/></svg>
<svg style="left:33px;top:462px" width="6" height="9" viewBox="0 0 6 9"><path d="M0 0.5H1M0 4.5H1M0 8.5H1" stroke="#111" stroke-width="1"/><path d="M2 0.5H6M2 2.5H6M2 4.5H6M2 6.5H6M2 8.5H6" stroke="#222" stroke-width="1"/></svg>
<div style="left:41px;top:435px;width:1px;height:43px;background:#e6e6e6"></div>
<div style="left:964px;top:436px;width:200px;height:20px;line-height:20px;text-align:center;font-size:12px;letter-spacing:0.4px">Basisangaben</div>
<div style="left:2086px;top:435px;width:56px;height:22px;background:#fff;border-left:1px solid #e2e2e2;border-right:1px solid #e2e2e2"></div>
<div style="left:2086px;top:436px;width:56px;height:20px;line-height:20px;text-align:center;font-size:12px">Text</div>
<div class="hd" style="left:42px;width:87px;border-left:none;">Position</div>
<div class="hd" style="left:129px;width:46px;">Pos (BV</div>
<div class="hd" style="left:175px;width:100px;">Verursacher Erste</div>
<div class="hd" style="left:275px;width:110px;">Verursacherliste</div>
<div class="hd" style="left:385px;width:65px;">Bestelldatu</div>
<div class="hd" style="left:450px;width:65px;">Lieferdatur</div>
<div class="hd" style="left:515px;width:40px;">Stückli</div>
<div class="hd" style="left:555px;width:140px;padding-left:21px;">Artikel-Nr.</div>
<div class="hd" style="left:695px;width:210px;">Artikelbezeichnung</div>
<div class="hd" style="left:905px;width:219px;">Dimension</div>
<div class="hd" style="left:1124px;width:40px;">Fertigu</div>
<div class="hd" style="left:1164px;width:40px;">Charg</div>
<div class="hd" style="left:1204px;width:40px;">Prüfm</div>
<div class="hd" style="left:1244px;width:80px;">Menge [Gesa</div>
<div class="hd" style="left:1324px;width:50px;">ME</div>
<div class="hd" style="left:1374px;width:75px;">Menge lager</div>
<div class="hd" style="left:1449px;width:75px;">Menge verfüg</div>
<div class="hd" style="left:1524px;width:74px;">Sollbestand</div>
<div class="hd" style="left:1598px;width:96px;">Referenz/Artikel-</div>
<div class="hd" style="left:1694px;width:56px;">AC</div>
<div class="hd" style="left:1750px;width:46px;">Zuschn</div>
<div class="hd" style="left:1796px;width:70px;">bvp_status</div>
<div class="hd" style="left:1866px;width:46px;">bvp_no</div>
<div class="hd" style="left:1912px;width:100px;">F-Norm</div>
<div class="hd" style="left:2012px;width:74px;">Alternativartil</div>
<div class="hd" style="left:2086px;width:55px;">Zusatztex</div>
<div class="hd" style="left:2141px;width:120px;padding-left:22px;">Lieferant</div>
<div class="hd" style="left:2261px;width:70px;">Preis [EP, M</div>
<div class="hd" style="left:2331px;width:24px;">Prei</div>
<svg style="left:561px;top:461px" width="11" height="11" viewBox="0 0 11 11"><path d="M1 0.5 L10 5.5 L1 10.5 Z" fill="#1a7fe8" stroke="#0b5fc0" stroke-width="0.8"/></svg>
<svg style="left:2147px;top:461px" width="11" height="11" viewBox="0 0 11 11"><path d="M1 0.5 L10 5.5 L1 10.5 Z" fill="#1a7fe8" stroke="#0b5fc0" stroke-width="0.8"/></svg>
<svg style="left:2247px;top:463px" width="8" height="8" viewBox="0 0 8 8"><path d="M4 0.7 L7.4 7.3 H0.6 Z" fill="none" stroke="#9a9a9a" stroke-width="0.8"/></svg>
<div style="left:41px;top:478px;width:2315px;height:18px;background:#f0f0f0"></div>
<div style="left:43.5px;top:479px;height:19px;line-height:19px;font-size:12px">Typ : 30:Bedarf</div>
<div style="left:41px;top:496px;width:15px;height:337px;background:#f0f0f0"></div>
<div style="left:56px;top:496px;width:2299px;height:1px;background:#d9d9d9"></div>
<div style="left:56px;top:497px;width:16px;height:21px;background:#efefef;border-bottom:1px solid #d9d9d9;border-left:1px solid #d9d9d9"></div>
<svg style="left:60px;top:503px" width="9" height="9" viewBox="0 0 9 9"><rect x="0.5" y="0.5" width="8" height="8" rx="1.3" fill="#f8f8f8" stroke="#8c8c8c"/><path d="M2 4.5H7M4.5 2V7" stroke="#3a4a9a" stroke-width="1"/></svg>
<div class="cell r" style="left:72px;top:497px;width:58px;background:#efefef;color:#000;">20</div>
<div class="cell" style="left:130px;top:497px;width:46px;background:#efefef;color:#000;"></div>
<div class="cb" style="left:146px;top:500px;border-color:#333"></div>
<div class="cell sm" style="left:176px;top:497px;width:100px;background:#ffffe1;color:#000;font-size:11px;letter-spacing:-0.122px;">Daniel Schuchard...</div>
<div class="cell sm" style="left:276px;top:497px;width:110px;background:#ffffe1;color:#000;font-size:11px;letter-spacing:-0.066px;">ABK 865548;ABK 8...</div>
<div class="cell" style="left:386px;top:497px;width:65px;background:#efefef;color:#e8101e;">10.10.25</div>
<div class="cell" style="left:451px;top:497px;width:65px;background:#efefef;color:#000;">21.11.25</div>
<div class="cell" style="left:516px;top:497px;width:40px;background:#ffffe1;color:#000;"></div>
<div class="cell u" style="left:556px;top:497px;width:140px;background:#efefef;color:#000;">E.B.PKW.A-1168534-0...</div>
<div class="cell bz" style="left:696px;top:497px;width:210px;background:#efefef;color:#000;">*Kühlung Sensoreinheit*</div>
<div class="cell sm dm" style="left:906px;top:497px;width:219px;background:#ffffe1;color:#000;"></div>
<div class="cell" style="left:1125px;top:497px;width:40px;background:#ffffe1;color:#000;"></div>
<div class="cb" style="left:1138px;top:500px;border-color:#333"></div>
<div class="cell" style="left:1165px;top:497px;width:40px;background:#ffffe1;color:#000;"></div>
<div class="cb" style="left:1178px;top:500px;border-color:#333"></div>
<div class="cell" style="left:1205px;top:497px;width:40px;background:#ffffe1;color:#000;"></div>
<div class="cb" style="left:1218px;top:500px;border-color:#333"></div>
<div class="cell r" style="left:1245px;top:497px;width:80px;background:#efefef;color:#000;">330,00</div>
<div class="cell" style="left:1325px;top:497px;width:50px;background:#ffffe1;color:#000;">Stk</div>
<div class="cell r" style="left:1375px;top:497px;width:75px;background:#ffffe1;color:#000;">0,000</div>
<div class="cell r" style="left:1450px;top:497px;width:75px;background:#ffffe1;color:#000;">-330,00</div>
<div class="cell r" style="left:1525px;top:497px;width:74px;background:#ffffe1;color:#000;"></div>
<div class="cell" style="left:1599px;top:497px;width:96px;background:#efefef;color:#000;"></div>
<div class="cell sm" style="left:1695px;top:497px;width:56px;background:#ffffe1;color:#000;font-size:11px;letter-spacing:-0.386px;">KT1001</div>
<div class="cell" style="left:1751px;top:497px;width:46px;background:#efefef;color:#000;"></div>
<div class="cb" style="left:1767px;top:500px;border-color:#333"></div>
<div class="cell" style="left:1797px;top:497px;width:70px;background:#ffffe1;color:#000;"></div>
<div class="cell" style="left:1867px;top:497px;width:46px;background:#efefef;color:#000;"></div>
<div class="cb" style="left:1883px;top:500px;border-color:#333"></div>
<div class="cell" style="left:1913px;top:497px;width:100px;background:#efefef;color:#000;"></div>
<div class="cell" style="left:2013px;top:497px;width:74px;background:#efefef;color:#000;"></div>
<div class="cell" style="left:2087px;top:497px;width:55px;background:#c1e8a1;color:#000;"></div>
<svg style="left:2106px;top:500px" width="16" height="14" viewBox="0 0 16 14"><path d="M1 0.6 H12 L15.4 3.6 V13 H1 Z" fill="#fff" stroke="#d4d4d4" stroke-width="0.9"/><path d="M1.4 13.2 H15.6 V4" fill="none" stroke="#c4c4c4" stroke-width="0.7"/><text x="7.6" y="10.6" font-size="10.5" font-style="italic" fill="#a0a0a0" text-anchor="middle" font-family="Liberation Sans,sans-serif">a</text></svg>
<div class="cell u" style="left:2142px;top:497px;width:120px;background:#f8b4a5;color:#000;"></div>
<div class="cell r" style="left:2262px;top:497px;width:70px;background:#efefef;color:#000;">0,00</div>
<div class="cell" style="left:2332px;top:497px;width:24px;background:#ffffe1;color:#000;"></div>
<div style="left:56px;top:518px;width:16px;height:21px;background:#fff;border-bottom:1px solid #d9d9d9;border-left:1px solid #d9d9d9"></div>
<svg style="left:60px;top:524px" width="9" height="9" viewBox="0 0 9 9"><rect x="0.5" y="0.5" width="8" height="8" rx="1.3" fill="#f8f8f8" stroke="#8c8c8c"/><path d="M2 4.5H7M4.5 2V7" stroke="#3a4a9a" stroke-width="1"/></svg>
<div class="cell r" style="left:72px;top:518px;width:58px;background:#fff;color:#000;">50</div>
<div class="cell" style="left:130px;top:518px;width:46px;background:#fff;color:#000;"></div>
<div class="cb" style="left:146px;top:521px;border-color:#333"></div>
<div class="cell sm" style="left:176px;top:518px;width:100px;background:#ffffe1;color:#000;font-size:11px;letter-spacing:0.186px;">Steffen Angrick</div>
<div class="cell sm" style="left:276px;top:518px;width:110px;background:#ffffe1;color:#000;font-size:11px;letter-spacing:-0.230px;">AUFTG E AG25-00...</div>
<div class="cell" style="left:386px;top:518px;width:65px;background:#fff;color:#e8101e;">25.11.25</div>
<div class="cell" style="left:451px;top:518px;width:65px;background:#fff;color:#000;">26.11.25</div>
<div class="cell" style="left:516px;top:518px;width:40px;background:#ffffe1;color:#000;"></div>
<div class="cell u" style="left:556px;top:518px;width:140px;background:#fff;color:#000;">1100030</div>
<div class="cell bz" style="left:696px;top:518px;width:210px;background:#fff;color:#000;">*Fertigteil 0815*</div>
<div class="cell sm dm" style="left:906px;top:518px;width:219px;background:#ffffe1;color:#000;"></div>
<div class="cell" style="left:1125px;top:518px;width:40px;background:#f8b4a5;color:#000;"></div>
<div class="cb" style="left:1138px;top:521px;border-color:#333"></div>
<svg style="left:1138px;top:521px" width="13" height="13" viewBox="0 0 13 13"><path d="M2.5 6.5 L5.2 9.5 L10.5 3" fill="none" stroke="#333" stroke-width="1.3"/></svg>
<div class="cell" style="left:1165px;top:518px;width:40px;background:#ffffe1;color:#000;"></div>
<div class="cb" style="left:1178px;top:521px;border-color:#333"></div>
<div class="cell" style="left:1205px;top:518px;width:40px;background:#ffffe1;color:#000;"></div>
<div class="cb" style="left:1218px;top:521px;border-color:#333"></div>
<div class="cell r" style="left:1245px;top:518px;width:80px;background:#fff;color:#000;">10,00</div>
<div class="cell" style="left:1325px;top:518px;width:50px;background:#ffffe1;color:#000;">Stk</div>
<div class="cell r" style="left:1375px;top:518px;width:75px;background:#ffffe1;color:#000;">0,000</div>
<div class="cell r" style="left:1450px;top:518px;width:75px;background:#ffffe1;color:#000;">-10,00</div>
<div class="cell r" style="left:1525px;top:518px;width:74px;background:#ffffe1;color:#000;"></div>
<div class="cell" style="left:1599px;top:518px;width:96px;background:#fff;color:#000;"></div>
<div class="cell sm" style="left:1695px;top:518px;width:56px;background:#ffffe1;color:#000;font-size:11px;letter-spacing:-0.631px;">PR1001</div>
<div class="cell" style="left:1751px;top:518px;width:46px;background:#fff;color:#000;"></div>
<div class="cb" style="left:1767px;top:521px;border-color:#333"></div>
<div class="cell" style="left:1797px;top:518px;width:70px;background:#ffffe1;color:#000;"></div>
<div class="cell" style="left:1867px;top:518px;width:46px;background:#fff;color:#000;"></div>
<div class="cb" style="left:1883px;top:521px;border-color:#333"></div>
<div class="cell" style="left:1913px;top:518px;width:100px;background:#fff;color:#000;"></div>
<div class="cell" style="left:2013px;top:518px;width:74px;background:#fff;color:#000;"></div>
<div class="cell" style="left:2087px;top:518px;width:55px;background:#c1e8a1;color:#000;"></div>
<svg style="left:2106px;top:521px" width="16" height="14" viewBox="0 0 16 14"><path d="M1 0.6 H12 L15.4 3.6 V13 H1 Z" fill="#fff" stroke="#d4d4d4" stroke-width="0.9"/><path d="M1.4 13.2 H15.6 V4" fill="none" stroke="#c4c4c4" stroke-width="0.7"/><text x="7.6" y="10.6" font-size="10.5" font-style="italic" fill="#a0a0a0" text-anchor="middle" font-family="Liberation Sans,sans-serif">a</text></svg>
<div class="cell u" style="left:2142px;top:518px;width:120px;background:#f8b4a5;color:#000;"></div>
<div class="cell r" style="left:2262px;top:518px;width:70px;background:#fff;color:#000;">20,91</div>
<div class="cell" style="left:2332px;top:518px;width:24px;background:#ffffe1;color:#000;"></div>
<div style="left:56px;top:539px;width:16px;height:21px;background:#efefef;border-bottom:1px solid #d9d9d9;border-left:1px solid #d9d9d9"></div>
<svg style="left:60px;top:545px" width="9" height="9" viewBox="0 0 9 9"><rect x="0.5" y="0.5" width="8" height="8" rx="1.3" fill="#f8f8f8" stroke="#8c8c8c"/><path d="M2 4.5H7M4.5 2V7" stroke="#3a4a9a" stroke-width="1"/></svg>
<div class="cell r" style="left:72px;top:539px;width:58px;background:#efefef;color:#000;">80</div>
<div class="cell" style="left:130px;top:539px;width:46px;background:#efefef;color:#000;"></div>
<div class="cb" style="left:146px;top:542px;border-color:#333"></div>
<div class="cell sm" style="left:176px;top:539px;width:100px;background:#ffffe1;color:#000;font-size:11px;letter-spacing:0.186px;">Steffen Angrick</div>
<div class="cell sm" style="left:276px;top:539px;width:110px;background:#ffffe1;color:#000;font-size:11px;letter-spacing:-0.066px;">ABK 865482;ABK 8...</div>
<div class="cell" style="left:386px;top:539px;width:65px;background:#efefef;color:#e8101e;">07.08.25</div>
<div class="cell" style="left:451px;top:539px;width:65px;background:#efefef;color:#000;">26.11.25</div>
<div class="cell" style="left:516px;top:539px;width:40px;background:#ffffe1;color:#000;"></div>
<div class="cell u" style="left:556px;top:539px;width:140px;background:#efefef;color:#000;">D.W.13.1100004</div>
<div class="cell bz" style="left:696px;top:539px;width:210px;background:#efefef;color:#000;">*Dichtung-Schutz13 mm*</div>
<div class="cell sm dm" style="left:906px;top:539px;width:219px;background:#ffffe1;color:#000;"></div>
<div class="cell" style="left:1125px;top:539px;width:40px;background:#ffffe1;color:#000;"></div>
<div class="cb" style="left:1138px;top:542px;border-color:#333"></div>
<div class="cell" style="left:1165px;top:539px;width:40px;background:#ffffe1;color:#000;"></div>
<div class="cb" style="left:1178px;top:542px;border-color:#333"></div>
<div class="cell" style="left:1205px;top:539px;width:40px;background:#ffffe1;color:#000;"></div>
<div class="cb" style="left:1218px;top:542px;border-color:#333"></div>
<div class="cell r" style="left:1245px;top:539px;width:80px;background:#efefef;color:#000;">420,00</div>
<div class="cell" style="left:1325px;top:539px;width:50px;background:#ffffe1;color:#000;">Stk</div>
<div class="cell r" style="left:1375px;top:539px;width:75px;background:#ffffe1;color:#000;">0,000</div>
<div class="cell r" style="left:1450px;top:539px;width:75px;background:#ffffe1;color:#000;">-680,00</div>
<div class="cell r" style="left:1525px;top:539px;width:74px;background:#ffffe1;color:#000;"></div>
<div class="cell" style="left:1599px;top:539px;width:96px;background:#efefef;color:#000;"></div>
<div class="cell sm" style="left:1695px;top:539px;width:56px;background:#ffffe1;color:#000;font-size:11px;letter-spacing:-0.386px;">KT1001</div>
<div class="cell" style="left:1751px;top:539px;width:46px;background:#efefef;color:#000;"></div>
<div class="cb" style="left:1767px;top:542px;border-color:#333"></div>
<div class="cell" style="left:1797px;top:539px;width:70px;background:#ffffe1;color:#000;"></div>
<div class="cell" style="left:1867px;top:539px;width:46px;background:#efefef;color:#000;"></div>
<div class="cb" style="left:1883px;top:542px;border-color:#333"></div>
<div class="cell" style="left:1913px;top:539px;width:100px;background:#efefef;color:#000;"></div>
<div class="cell" style="left:2013px;top:539px;width:74px;background:#efefef;color:#000;"></div>
<div class="cell" style="left:2087px;top:539px;width:55px;background:#c1e8a1;color:#000;"></div>
<svg style="left:2106px;top:542px" width="16" height="14" viewBox="0 0 16 14"><path d="M1 0.6 H12 L15.4 3.6 V13 H1 Z" fill="#fff" stroke="#d4d4d4" stroke-width="0.9"/><path d="M1.4 13.2 H15.6 V4" fill="none" stroke="#c4c4c4" stroke-width="0.7"/><text x="7.6" y="10.6" font-size="10.5" font-style="italic" fill="#a0a0a0" text-anchor="middle" font-family="Liberation Sans,sans-serif">a</text></svg>
<div class="cell u" style="left:2142px;top:539px;width:120px;background:#f8b4a5;color:#000;"></div>
<div class="cell r" style="left:2262px;top:539px;width:70px;background:#efefef;color:#000;">0,00</div>
<div class="cell" style="left:2332px;top:539px;width:24px;background:#ffffe1;color:#000;"></div>
<div style="left:56px;top:560px;width:16px;height:21px;background:#fff;border-bottom:1px solid #d9d9d9;border-left:1px solid #d9d9d9"></div>
<svg style="left:60px;top:566px" width="9" height="9" viewBox="0 0 9 9"><rect x="0.5" y="0.5" width="8" height="8" rx="1.3" fill="#f8f8f8" stroke="#8c8c8c"/><path d="M2 4.5H7M4.5 2V7" stroke="#3a4a9a" stroke-width="1"/></svg>
<div class="cell r" style="left:72px;top:560px;width:58px;background:#fff;color:#000;">90</div>
<div class="cell" style="left:130px;top:560px;width:46px;background:#fff;color:#000;"></div>
<div class="cb" style="left:146px;top:563px;border-color:#333"></div>
<div class="cell sm" style="left:176px;top:560px;width:100px;background:#ffffe1;color:#000;font-size:11px;letter-spacing:-0.275px;">Max Mustermann</div>
<div class="cell sm" style="left:276px;top:560px;width:110px;background:#ffffe1;color:#000;font-size:11px;letter-spacing:-0.230px;">AUFTG E AG25-00...</div>
<div class="cell" style="left:386px;top:560px;width:65px;background:#fff;color:#e8101e;">31.07.25</div>
<div class="cell" style="left:451px;top:560px;width:65px;background:#fff;color:#000;">26.11.25</div>
<div class="cell" style="left:516px;top:560px;width:40px;background:#ffffe1;color:#000;"></div>
<div class="cell u" style="left:556px;top:560px;width:140px;background:#fff;color:#000;">F.13.N-272.371 /A</div>
<div class="cell bz" style="left:696px;top:560px;width:210px;background:#fff;color:#000;">*Flansch A*</div>
<div class="cell sm dm" style="left:906px;top:560px;width:219px;background:#ffffe1;color:#000;"></div>
<div class="cell" style="left:1125px;top:560px;width:40px;background:#f8b4a5;color:#000;"></div>
<div class="cb" style="left:1138px;top:563px;border-color:#333"></div>
<svg style="left:1138px;top:563px" width="13" height="13" viewBox="0 0 13 13"><path d="M2.5 6.5 L5.2 9.5 L10.5 3" fill="none" stroke="#333" stroke-width="1.3"/></svg>
<div class="cell" style="left:1165px;top:560px;width:40px;background:#ffffe1;color:#000;"></div>
<div class="cb" style="left:1178px;top:563px;border-color:#333"></div>
<div class="cell" style="left:1205px;top:560px;width:40px;background:#ffffe1;color:#000;"></div>
<div class="cb" style="left:1218px;top:563px;border-color:#333"></div>
<div class="cell r" style="left:1245px;top:560px;width:80px;background:#fff;color:#000;">850,00</div>
<div class="cell" style="left:1325px;top:560px;width:50px;background:#ffffe1;color:#000;">Stk</div>
<div class="cell r" style="left:1375px;top:560px;width:75px;background:#ffffe1;color:#000;">0,000</div>
<div class="cell r" style="left:1450px;top:560px;width:75px;background:#f8b4a5;color:#000;">210,00</div>
<div class="cell r" style="left:1525px;top:560px;width:74px;background:#ffffe1;color:#000;"></div>
<div class="cell" style="left:1599px;top:560px;width:96px;background:#fff;color:#000;"></div>
<div class="cell sm" style="left:1695px;top:560px;width:56px;background:#ffffe1;color:#000;font-size:11px;letter-spacing:-0.631px;">PR1001</div>
<div class="cell" style="left:1751px;top:560px;width:46px;background:#fff;color:#000;"></div>
<div class="cb" style="left:1767px;top:563px;border-color:#333"></div>
<div class="cell" style="left:1797px;top:560px;width:70px;background:#ffffe1;color:#000;"></div>
<div class="cell" style="left:1867px;top:560px;width:46px;background:#fff;color:#000;"></div>
<div class="cb" style="left:1883px;top:563px;border-color:#333"></div>
<div class="cell" style="left:1913px;top:560px;width:100px;background:#fff;color:#000;"></div>
<div class="cell" style="left:2013px;top:560px;width:74px;background:#fff;color:#000;"></div>
<div class="cell" style="left:2087px;top:560px;width:55px;background:#c1e8a1;color:#000;"></div>
<svg style="left:2106px;top:563px" width="16" height="14" viewBox="0 0 16 14"><path d="M1 0.6 H12 L15.4 3.6 V13 H1 Z" fill="#fff" stroke="#d4d4d4" stroke-width="0.9"/><path d="M1.4 13.2 H15.6 V4" fill="none" stroke="#c4c4c4" stroke-width="0.7"/><text x="7.6" y="10.6" font-size="10.5" font-style="italic" fill="#a0a0a0" text-anchor="middle" font-family="Liberation Sans,sans-serif">a</text></svg>
<div class="cell u" style="left:2142px;top:560px;width:120px;background:#f8b4a5;color:#000;"></div>
<div class="cell r" style="left:2262px;top:560px;width:70px;background:#fff;color:#000;">580,75</div>
<div class="cell" style="left:2332px;top:560px;width:24px;background:#ffffe1;color:#000;"></div>
<div style="left:56px;top:581px;width:16px;height:21px;background:#efefef;border-bottom:1px solid #d9d9d9;border-left:1px solid #d9d9d9"></div>
<svg style="left:60px;top:587px" width="9" height="9" viewBox="0 0 9 9"><rect x="0.5" y="0.5" width="8" height="8" rx="1.3" fill="#f8f8f8" stroke="#8c8c8c"/><path d="M2 4.5H7M4.5 2V7" stroke="#3a4a9a" stroke-width="1"/></svg>
<div class="cell r" style="left:72px;top:581px;width:58px;background:#efefef;color:#000;">110</div>
<div class="cell" style="left:130px;top:581px;width:46px;background:#efefef;color:#000;"></div>
<div class="cb" style="left:146px;top:584px;border-color:#333"></div>
<div class="cell sm" style="left:176px;top:581px;width:100px;background:#ffffe1;color:#000;font-size:11px;letter-spacing:-0.275px;">Max Mustermann</div>
<div class="cell sm" style="left:276px;top:581px;width:110px;background:#ffffe1;color:#000;font-size:11px;letter-spacing:-0.230px;">AUFTG E AG25-00...</div>
<div class="cell" style="left:386px;top:581px;width:65px;background:#efefef;color:#e8101e;">17.09.25</div>
<div class="cell" style="left:451px;top:581px;width:65px;background:#efefef;color:#000;">26.11.25</div>
<div class="cell" style="left:516px;top:581px;width:40px;background:#ffffe1;color:#000;"></div>
<div class="cell u" style="left:556px;top:581px;width:140px;background:#efefef;color:#000;">W.13.N-272.371 /A</div>
<div class="cell bz" style="left:696px;top:581px;width:210px;background:#efefef;color:#000;">*Welle Nut A*</div>
<div class="cell sm dm" style="left:906px;top:581px;width:219px;background:#ffffe1;color:#000;">Ø13x37 mm</div>
<div class="cell" style="left:1125px;top:581px;width:40px;background:#f8b4a5;color:#000;"></div>
<div class="cb" style="left:1138px;top:584px;border-color:#333"></div>
<svg style="left:1138px;top:584px" width="13" height="13" viewBox="0 0 13 13"><path d="M2.5 6.5 L5.2 9.5 L10.5 3" fill="none" stroke="#333" stroke-width="1.3"/></svg>
<div class="cell" style="left:1165px;top:581px;width:40px;background:#ffffe1;color:#000;"></div>
<div class="cb" style="left:1178px;top:584px;border-color:#333"></div>
<div class="cell" style="left:1205px;top:581px;width:40px;background:#ffffe1;color:#000;"></div>
<div class="cb" style="left:1218px;top:584px;border-color:#333"></div>
<div class="cell r" style="left:1245px;top:581px;width:80px;background:#efefef;color:#000;">12.150,00</div>
<div class="cell" style="left:1325px;top:581px;width:50px;background:#ffffe1;color:#000;">Stk</div>
<div class="cell r" style="left:1375px;top:581px;width:75px;background:#ffffe1;color:#000;">0,000</div>
<div class="cell r" style="left:1450px;top:581px;width:75px;background:#ffffe1;color:#000;">-946,00</div>
<div class="cell r" style="left:1525px;top:581px;width:74px;background:#ffffe1;color:#000;"></div>
<div class="cell" style="left:1599px;top:581px;width:96px;background:#efefef;color:#000;"></div>
<div class="cell sm" style="left:1695px;top:581px;width:56px;background:#ffffe1;color:#000;font-size:11px;letter-spacing:-0.631px;">PR1001</div>
<div class="cell" style="left:1751px;top:581px;width:46px;background:#efefef;color:#000;"></div>
<div class="cb" style="left:1767px;top:584px;border-color:#333"></div>
<div class="cell" style="left:1797px;top:581px;width:70px;background:#ffffe1;color:#000;"></div>
<div class="cell" style="left:1867px;top:581px;width:46px;background:#efefef;color:#000;"></div>
<div class="cb" style="left:1883px;top:584px;border-color:#333"></div>
<div class="cell" style="left:1913px;top:581px;width:100px;background:#efefef;color:#000;"></div>
<div class="cell" style="left:2013px;top:581px;width:74px;background:#efefef;color:#000;"></div>
<div class="cell" style="left:2087px;top:581px;width:55px;background:#c1e8a1;color:#000;"></div>
<svg style="left:2106px;top:584px" width="16" height="14" viewBox="0 0 16 14"><path d="M1 0.6 H12 L15.4 3.6 V13 H1 Z" fill="#fff" stroke="#d4d4d4" stroke-width="0.9"/><path d="M1.4 13.2 H15.6 V4" fill="none" stroke="#c4c4c4" stroke-width="0.7"/><text x="7.6" y="10.6" font-size="10.5" font-style="italic" fill="#a0a0a0" text-anchor="middle" font-family="Liberation Sans,sans-serif">a</text></svg>
<div class="cell u" style="left:2142px;top:581px;width:120px;background:#f8b4a5;color:#000;"></div>
<div class="cell r" style="left:2262px;top:581px;width:70px;background:#efefef;color:#000;">59,21</div>
<div class="cell" style="left:2332px;top:581px;width:24px;background:#ffffe1;color:#000;"></div>
<div style="left:56px;top:602px;width:16px;height:21px;background:#fff;border-bottom:1px solid #d9d9d9;border-left:1px solid #d9d9d9"></div>
<svg style="left:60px;top:608px" width="9" height="9" viewBox="0 0 9 9"><rect x="0.5" y="0.5" width="8" height="8" rx="1.3" fill="#f8f8f8" stroke="#8c8c8c"/><path d="M2 4.5H7M4.5 2V7" stroke="#3a4a9a" stroke-width="1"/></svg>
<div class="cell r" style="left:72px;top:602px;width:58px;background:#fff;color:#000;">140</div>
<div class="cell" style="left:130px;top:602px;width:46px;background:#fff;color:#000;"></div>
<div class="cb" style="left:146px;top:605px;border-color:#333"></div>
<div class="cell sm" style="left:176px;top:602px;width:100px;background:#ffffe1;color:#000;font-size:11px;letter-spacing:0.186px;">Steffen Angrick</div>
<div class="cell sm" style="left:276px;top:602px;width:110px;background:#ffffe1;color:#000;font-size:11px;letter-spacing:-0.066px;">ABK 865495;ABK 8...</div>
<div class="cell" style="left:386px;top:602px;width:65px;background:#fff;color:#000;">27.11.25</div>
<div class="cell" style="left:451px;top:602px;width:65px;background:#fff;color:#000;">28.11.25</div>
<div class="cell" style="left:516px;top:602px;width:40px;background:#ffffe1;color:#000;"></div>
<div class="cell u" style="left:556px;top:602px;width:140px;background:#fff;color:#000;">1100017</div>
<div class="cell bz" style="left:696px;top:602px;width:210px;background:#fff;color:#000;">*Stahlblech*</div>
<div class="cell sm dm" style="left:906px;top:602px;width:219px;background:#ffffe1;color:#000;">6000x80x10</div>
<div class="cell" style="left:1125px;top:602px;width:40px;background:#ffffe1;color:#000;"></div>
<div class="cb" style="left:1138px;top:605px;border-color:#333"></div>
<div class="cell" style="left:1165px;top:602px;width:40px;background:#f8b4a5;color:#000;"></div>
<div class="cb" style="left:1178px;top:605px;border-color:#333"></div>
<svg style="left:1178px;top:605px" width="13" height="13" viewBox="0 0 13 13"><path d="M2.5 6.5 L5.2 9.5 L10.5 3" fill="none" stroke="#333" stroke-width="1.3"/></svg>
<div class="cell" style="left:1205px;top:602px;width:40px;background:#f8b4a5;color:#000;"></div>
<div class="cb" style="left:1218px;top:605px;border-color:#333"></div>
<svg style="left:1218px;top:605px" width="13" height="13" viewBox="0 0 13 13"><path d="M2.5 6.5 L5.2 9.5 L10.5 3" fill="none" stroke="#333" stroke-width="1.3"/></svg>
<div class="cell r" style="left:1245px;top:602px;width:80px;background:#fff;color:#000;">9.280,00</div>
<div class="cell" style="left:1325px;top:602px;width:50px;background:#ffffe1;color:#000;">mm</div>
<div class="cell r" style="left:1375px;top:602px;width:75px;background:#ffffe1;color:#000;">0,000</div>
<div class="cell r" style="left:1450px;top:602px;width:75px;background:#ffffe1;color:#000;">-9.280,00</div>
<div class="cell r" style="left:1525px;top:602px;width:74px;background:#ffffe1;color:#000;"></div>
<div class="cell" style="left:1599px;top:602px;width:96px;background:#fff;color:#000;"></div>
<div class="cell sm" style="left:1695px;top:602px;width:56px;background:#ffffe1;color:#000;font-size:11px;letter-spacing:-0.656px;">RM1001</div>
<div class="cell" style="left:1751px;top:602px;width:46px;background:#fff;color:#000;"></div>
<div class="cb" style="left:1767px;top:605px;border-color:#333"></div>
<svg style="left:1767px;top:605px" width="13" height="13" viewBox="0 0 13 13"><path d="M2.5 6.5 L5.2 9.5 L10.5 3" fill="none" stroke="#333" stroke-width="1.3"/></svg>
<div class="cell" style="left:1797px;top:602px;width:70px;background:#ffffe1;color:#000;"></div>
<div class="cell" style="left:1867px;top:602px;width:46px;background:#fff;color:#000;"></div>
<div class="cb" style="left:1883px;top:605px;border-color:#333"></div>
<div class="cell" style="left:1913px;top:602px;width:100px;background:#fff;color:#000;"></div>
<div class="cell" style="left:2013px;top:602px;width:74px;background:#fff;color:#000;"></div>
<div class="cell" style="left:2087px;top:602px;width:55px;background:#c1e8a1;color:#000;"></div>
<svg style="left:2106px;top:605px" width="16" height="14" viewBox="0 0 16 14"><path d="M1 0.6 H12 L15.4 3.6 V13 H1 Z" fill="#fff" stroke="#d4d4d4" stroke-width="0.9"/><path d="M1.4 13.2 H15.6 V4" fill="none" stroke="#c4c4c4" stroke-width="0.7"/><text x="7.6" y="10.6" font-size="10.5" font-style="italic" fill="#a0a0a0" text-anchor="middle" font-family="Liberation Sans,sans-serif">a</text></svg>
<div class="cell u" style="left:2142px;top:602px;width:120px;background:#f8b4a5;color:#000;"></div>
<div class="cell r" style="left:2262px;top:602px;width:70px;background:#fff;color:#000;">0,00</div>
<div class="cell" style="left:2332px;top:602px;width:24px;background:#ffffe1;color:#000;"></div>
<div style="left:56px;top:623px;width:16px;height:21px;background:#efefef;border-bottom:1px solid #d9d9d9;border-left:1px solid #d9d9d9"></div>
<svg style="left:60px;top:629px" width="9" height="9" viewBox="0 0 9 9"><rect x="0.5" y="0.5" width="8" height="8" rx="1.3" fill="#f8f8f8" stroke="#8c8c8c"/><path d="M2 4.5H7M4.5 2V7" stroke="#3a4a9a" stroke-width="1"/></svg>
<div class="cell r" style="left:72px;top:623px;width:58px;background:#efefef;color:#000;">150</div>
<div class="cell" style="left:130px;top:623px;width:46px;background:#efefef;color:#000;"></div>
<div class="cb" style="left:146px;top:626px;border-color:#333"></div>
<div class="cell sm" style="left:176px;top:623px;width:100px;background:#ffffe1;color:#000;font-size:11px;letter-spacing:-0.122px;">Daniel Schuchard...</div>
<div class="cell sm" style="left:276px;top:623px;width:110px;background:#ffffe1;color:#000;font-size:11px;letter-spacing:-0.066px;">ABK 865552;ABK 8...</div>
<div class="cell" style="left:386px;top:623px;width:65px;background:#efefef;color:#e8101e;">24.10.25</div>
<div class="cell" style="left:451px;top:623px;width:65px;background:#efefef;color:#000;">05.12.25</div>
<div class="cell" style="left:516px;top:623px;width:40px;background:#ffffe1;color:#000;"></div>
<div class="cell u" style="left:556px;top:623px;width:140px;background:#efefef;color:#000;">E.B.PKW.A-1168534-0...</div>
<div class="cell bz" style="left:696px;top:623px;width:210px;background:#efefef;color:#000;">*Platine Ansteuerung eine Sensorei...</div>
<div class="cell sm dm" style="left:906px;top:623px;width:219px;background:#ffffe1;color:#000;"></div>
<div class="cell" style="left:1125px;top:623px;width:40px;background:#ffffe1;color:#000;"></div>
<div class="cb" style="left:1138px;top:626px;border-color:#333"></div>
<div class="cell" style="left:1165px;top:623px;width:40px;background:#ffffe1;color:#000;"></div>
<div class="cb" style="left:1178px;top:626px;border-color:#333"></div>
<div class="cell" style="left:1205px;top:623px;width:40px;background:#ffffe1;color:#000;"></div>
<div class="cb" style="left:1218px;top:626px;border-color:#333"></div>
<div class="cell r" style="left:1245px;top:623px;width:80px;background:#efefef;color:#000;">243,00</div>
<div class="cell" style="left:1325px;top:623px;width:50px;background:#ffffe1;color:#000;">Stk</div>
<div class="cell r" style="left:1375px;top:623px;width:75px;background:#ffffe1;color:#000;">13,000</div>
<div class="cell r" style="left:1450px;top:623px;width:75px;background:#ffffe1;color:#000;">-243,00</div>
<div class="cell r" style="left:1525px;top:623px;width:74px;background:#ffffe1;color:#000;">20,00</div>
<div class="cell" style="left:1599px;top:623px;width:96px;background:#efefef;color:#000;">1168534</div>
<div class="cell sm" style="left:1695px;top:623px;width:56px;background:#ffffe1;color:#000;font-size:11px;letter-spacing:-0.386px;">KT1001</div>
<div class="cell" style="left:1751px;top:623px;width:46px;background:#efefef;color:#000;"></div>
<div class="cb" style="left:1767px;top:626px;border-color:#333"></div>
<div class="cell" style="left:1797px;top:623px;width:70px;background:#ffffe1;color:#000;"></div>
<div class="cell" style="left:1867px;top:623px;width:46px;background:#efefef;color:#000;"></div>
<div class="cb" style="left:1883px;top:626px;border-color:#333"></div>
<div class="cell" style="left:1913px;top:623px;width:100px;background:#efefef;color:#000;"></div>
<div class="cell" style="left:2013px;top:623px;width:74px;background:#efefef;color:#000;"></div>
<div class="cell" style="left:2087px;top:623px;width:55px;background:#c1e8a1;color:#000;"></div>
<svg style="left:2106px;top:626px" width="16" height="14" viewBox="0 0 16 14"><path d="M1 0.6 H12 L15.4 3.6 V13 H1 Z" fill="#fff" stroke="#d4d4d4" stroke-width="0.9"/><path d="M1.4 13.2 H15.6 V4" fill="none" stroke="#c4c4c4" stroke-width="0.7"/><text x="7.6" y="10.6" font-size="10.5" font-style="italic" fill="#a0a0a0" text-anchor="middle" font-family="Liberation Sans,sans-serif">a</text></svg>
<div class="cell u" style="left:2142px;top:623px;width:120px;background:#efefef;color:#000;">ELEKTR</div>
<div class="cell r" style="left:2262px;top:623px;width:70px;background:#efefef;color:#000;">149,00</div>
<div class="cell" style="left:2332px;top:623px;width:24px;background:#ffffe1;color:#000;"></div>
<div style="left:56px;top:644px;width:16px;height:21px;background:#fff;border-bottom:1px solid #d9d9d9;border-left:1px solid #d9d9d9"></div>
<svg style="left:60px;top:650px" width="9" height="9" viewBox="0 0 9 9"><rect x="0.5" y="0.5" width="8" height="8" rx="1.3" fill="#f8f8f8" stroke="#8c8c8c"/><path d="M2 4.5H7M4.5 2V7" stroke="#3a4a9a" stroke-width="1"/></svg>
<div class="cell r" style="left:72px;top:644px;width:58px;background:#0078d7;color:#fff;border-right-color:#3a93df;border-bottom-color:#0078d7;letter-spacing:0;">30</div>
<div class="cell" style="left:130px;top:644px;width:46px;background:#0078d7;color:#fff;border-right-color:#3a93df;border-bottom-color:#0078d7;letter-spacing:0;"></div>
<div class="cb" style="left:146px;top:647px;border-color:#333"></div>
<div class="cell sm" style="left:176px;top:644px;width:100px;background:#0078d7;color:#fff;border-right-color:#3a93df;border-bottom-color:#0078d7;letter-spacing:0;font-size:11px;letter-spacing:-1.156px;">CIMPCS</div>
<div class="cell sm" style="left:276px;top:644px;width:110px;background:#0078d7;color:#fff;border-right-color:#3a93df;border-bottom-color:#0078d7;letter-spacing:0;font-size:11px;letter-spacing:-0.230px;">AUFTG E AG25-00...</div>
<div class="cell" style="left:386px;top:644px;width:65px;background:#0078d7;color:#e8101e;border-right-color:#3a93df;border-bottom-color:#0078d7;letter-spacing:0;">25.11.25</div>
<div class="cell" style="left:451px;top:644px;width:65px;background:#0078d7;color:#fff;border-right-color:#3a93df;border-bottom-color:#0078d7;letter-spacing:0;">26.11.25</div>
<div class="cell" style="left:516px;top:644px;width:40px;background:#0078d7;color:#fff;border-right-color:#3a93df;border-bottom-color:#0078d7;letter-spacing:0;"></div>
<div class="cell u" style="left:556px;top:644px;width:140px;background:#0078d7;color:#fff;border-right-color:#3a93df;border-bottom-color:#0078d7;letter-spacing:0;">000051.1</div>
<div class="cell bz" style="left:696px;top:644px;width:210px;background:#0078d7;color:#fff;border-right-color:#3a93df;border-bottom-color:#0078d7;letter-spacing:0;">*SCHEIBE A2.2 DIN 125 GAL:ZN*</div>
<div class="cell sm dm" style="left:906px;top:644px;width:219px;background:#0078d7;color:#fff;border-right-color:#3a93df;border-bottom-color:#0078d7;letter-spacing:0;"></div>
<div class="cell" style="left:1125px;top:644px;width:40px;background:#0078d7;color:#fff;border-right-color:#3a93df;border-bottom-color:#0078d7;letter-spacing:0;"></div>
<div class="cb" style="left:1138px;top:647px;border-color:#333"></div>
<div class="cell" style="left:1165px;top:644px;width:40px;background:#0078d7;color:#fff;border-right-color:#3a93df;border-bottom-color:#0078d7;letter-spacing:0;"></div>
<div class="cb" style="left:1178px;top:647px;border-color:#333"></div>
<div class="cell" style="left:1205px;top:644px;width:40px;background:#0078d7;color:#fff;border-right-color:#3a93df;border-bottom-color:#0078d7;letter-spacing:0;"></div>
<div class="cb" style="left:1218px;top:647px;border-color:#333"></div>
<div class="cell r" style="left:1245px;top:644px;width:80px;background:#0078d7;color:#fff;border-right-color:#3a93df;border-bottom-color:#0078d7;letter-spacing:0;">10,00</div>
<div class="cell" style="left:1325px;top:644px;width:50px;background:#0078d7;color:#fff;border-right-color:#3a93df;border-bottom-color:#0078d7;letter-spacing:0;">Stk</div>
<div class="cell r" style="left:1375px;top:644px;width:75px;background:#0078d7;color:#fff;border-right-color:#3a93df;border-bottom-color:#0078d7;letter-spacing:0;">0,000</div>
<div class="cell r" style="left:1450px;top:644px;width:75px;background:#0078d7;color:#fff;border-right-color:#3a93df;border-bottom-color:#0078d7;letter-spacing:0;">-2,00</div>
<div class="cell r" style="left:1525px;top:644px;width:74px;background:#0078d7;color:#fff;border-right-color:#3a93df;border-bottom-color:#0078d7;letter-spacing:0;"></div>
<div class="cell" style="left:1599px;top:644px;width:96px;background:#0078d7;color:#fff;border-right-color:#3a93df;border-bottom-color:#0078d7;letter-spacing:0;"></div>
<div class="cell sm" style="left:1695px;top:644px;width:56px;background:#0078d7;color:#fff;border-right-color:#3a93df;border-bottom-color:#0078d7;letter-spacing:0;font-size:11px;letter-spacing:-0.386px;">KT1001</div>
<div class="cell" style="left:1751px;top:644px;width:46px;background:#0078d7;color:#fff;border-right-color:#3a93df;border-bottom-color:#0078d7;letter-spacing:0;"></div>
<div class="cb" style="left:1767px;top:647px;border-color:#333"></div>
<div class="cell" style="left:1797px;top:644px;width:70px;background:#0078d7;color:#fff;border-right-color:#3a93df;border-bottom-color:#0078d7;letter-spacing:0;"></div>
<div class="cell" style="left:1867px;top:644px;width:46px;background:#0078d7;color:#fff;border-right-color:#3a93df;border-bottom-color:#0078d7;letter-spacing:0;"></div>
<div class="cb" style="left:1883px;top:647px;border-color:#333"></div>
<div class="cell" style="left:1913px;top:644px;width:100px;background:#0078d7;color:#fff;border-right-color:#3a93df;border-bottom-color:#0078d7;letter-spacing:0;"></div>
<div class="cell" style="left:2013px;top:644px;width:74px;background:#0078d7;color:#fff;border-right-color:#3a93df;border-bottom-color:#0078d7;letter-spacing:0;"></div>
<div class="cell" style="left:2087px;top:644px;width:55px;background:#0078d7;color:#fff;border-right-color:#3a93df;border-bottom-color:#0078d7;letter-spacing:0;"></div>
<div class="cell u" style="left:2142px;top:644px;width:120px;background:#0078d7;color:#fff;border-right-color:#3a93df;border-bottom-color:#0078d7;letter-spacing:0;"></div>
<div class="cell r" style="left:2262px;top:644px;width:70px;background:#0078d7;color:#fff;border-right-color:#3a93df;border-bottom-color:#0078d7;letter-spacing:0;"></div>
<div class="cell" style="left:2332px;top:644px;width:24px;background:#0078d7;color:#fff;border-right-color:#3a93df;border-bottom-color:#0078d7;letter-spacing:0;"></div>
<div style="left:56px;top:665px;width:16px;height:21px;background:#efefef;border-bottom:1px solid #d9d9d9;border-left:1px solid #d9d9d9"></div>
<svg style="left:60px;top:671px" width="9" height="9" viewBox="0 0 9 9"><rect x="0.5" y="0.5" width="8" height="8" rx="1.3" fill="#f8f8f8" stroke="#8c8c8c"/><path d="M2 4.5H7M4.5 2V7" stroke="#3a4a9a" stroke-width="1"/></svg>
<div class="cell r" style="left:72px;top:665px;width:58px;background:#efefef;color:#000;">40</div>
<div class="cell" style="left:130px;top:665px;width:46px;background:#efefef;color:#000;"></div>
<div class="cb" style="left:146px;top:668px;border-color:#333"></div>
<div class="cell sm" style="left:176px;top:665px;width:100px;background:#ffffe1;color:#000;font-size:11px;letter-spacing:0.186px;">Steffen Angrick</div>
<div class="cell sm" style="left:276px;top:665px;width:110px;background:#ffffe1;color:#000;font-size:11px;letter-spacing:-0.230px;">AUFTG E AG25-00...</div>
<div class="cell" style="left:386px;top:665px;width:65px;background:#efefef;color:#e8101e;">23.10.25</div>
<div class="cell" style="left:451px;top:665px;width:65px;background:#efefef;color:#000;">26.11.25</div>
<div class="cell" style="left:516px;top:665px;width:40px;background:#ffffe1;color:#000;"></div>
<div class="cell u" style="left:556px;top:665px;width:140px;background:#efefef;color:#000;">1100014</div>
<div class="cell bz" style="left:696px;top:665px;width:210px;background:#efefef;color:#000;">*Stahl Welle DN40*</div>
<div class="cell sm dm" style="left:906px;top:665px;width:219px;background:#ffffe1;color:#000;"></div>
<div class="cell" style="left:1125px;top:665px;width:40px;background:#f8b4a5;color:#000;"></div>
<div class="cb" style="left:1138px;top:668px;border-color:#333"></div>
<svg style="left:1138px;top:668px" width="13" height="13" viewBox="0 0 13 13"><path d="M2.5 6.5 L5.2 9.5 L10.5 3" fill="none" stroke="#333" stroke-width="1.3"/></svg>
<div class="cell" style="left:1165px;top:665px;width:40px;background:#f8b4a5;color:#000;"></div>
<div class="cb" style="left:1178px;top:668px;border-color:#333"></div>
<svg style="left:1178px;top:668px" width="13" height="13" viewBox="0 0 13 13"><path d="M2.5 6.5 L5.2 9.5 L10.5 3" fill="none" stroke="#333" stroke-width="1.3"/></svg>
<div class="cell" style="left:1205px;top:665px;width:40px;background:#f8b4a5;color:#000;"></div>
<div class="cb" style="left:1218px;top:668px;border-color:#333"></div>
<svg style="left:1218px;top:668px" width="13" height="13" viewBox="0 0 13 13"><path d="M2.5 6.5 L5.2 9.5 L10.5 3" fill="none" stroke="#333" stroke-width="1.3"/></svg>
<div class="cell r" style="left:1245px;top:665px;width:80px;background:#efefef;color:#000;">10,00</div>
<div class="cell" style="left:1325px;top:665px;width:50px;background:#ffffe1;color:#000;">Stk</div>
<div class="cell r" style="left:1375px;top:665px;width:75px;background:#ffffe1;color:#000;">110,000</div>
<div class="cell r" style="left:1450px;top:665px;width:75px;background:#ffffe1;color:#000;">-10,00</div>
<div class="cell r" style="left:1525px;top:665px;width:74px;background:#ffffe1;color:#000;"></div>
<div class="cell" style="left:1599px;top:665px;width:96px;background:#efefef;color:#000;"></div>
<div class="cell sm" style="left:1695px;top:665px;width:56px;background:#ffffe1;color:#000;font-size:11px;letter-spacing:-0.631px;">PR1001</div>
<div class="cell" style="left:1751px;top:665px;width:46px;background:#efefef;color:#000;"></div>
<div class="cb" style="left:1767px;top:668px;border-color:#333"></div>
<div class="cell" style="left:1797px;top:665px;width:70px;background:#ffffe1;color:#000;"></div>
<div style="left:56px;top:686px;width:16px;height:21px;background:#fff;border-bottom:1px solid #d9d9d9;border-left:1px solid #d9d9d9"></div>
<svg style="left:60px;top:692px" width="9" height="9" viewBox="0 0 9 9"><rect x="0.5" y="0.5" width="8" height="8" rx="1.3" fill="#f8f8f8" stroke="#8c8c8c"/><path d="M2 4.5H7M4.5 2V7" stroke="#3a4a9a" stroke-width="1"/></svg>
<div class="cell r" style="left:72px;top:686px;width:58px;background:#fff;color:#000;">10</div>
<div class="cell" style="left:130px;top:686px;width:46px;background:#fff;color:#000;"></div>
<div class="cb" style="left:146px;top:689px;border-color:#333"></div>
<div class="cell sm" style="left:176px;top:686px;width:100px;background:#ffffe1;color:#000;font-size:11px;letter-spacing:0.186px;">Steffen Angrick</div>
<div class="cell sm" style="left:276px;top:686px;width:110px;background:#ffffe1;color:#000;font-size:11px;letter-spacing:-0.066px;">ABK 865577;ABK 8...</div>
<div class="cell" style="left:386px;top:686px;width:65px;background:#fff;color:#e8101e;">20.11.25</div>
<div class="cell" style="left:451px;top:686px;width:65px;background:#fff;color:#000;">21.11.25</div>
<div class="cell" style="left:516px;top:686px;width:40px;background:#ffffe1;color:#000;"></div>
<div class="cell u" style="left:556px;top:686px;width:140px;background:#fff;color:#000;">D.W.13.1100003</div>
<div class="cell bz" style="left:696px;top:686px;width:210px;background:#fff;color:#000;">*Dichtung-Einsatz 13 mm*</div>
<div class="cell sm dm" style="left:906px;top:686px;width:219px;background:#ffffe1;color:#000;"></div>
<div class="cell" style="left:1125px;top:686px;width:40px;background:#ffffe1;color:#000;"></div>
<div class="cb" style="left:1138px;top:689px;border-color:#333"></div>
<div class="cell" style="left:1165px;top:686px;width:40px;background:#ffffe1;color:#000;"></div>
<div class="cb" style="left:1178px;top:689px;border-color:#333"></div>
<div class="cell" style="left:1205px;top:686px;width:40px;background:#ffffe1;color:#000;"></div>
<div class="cb" style="left:1218px;top:689px;border-color:#333"></div>
<div class="cell r" style="left:1245px;top:686px;width:80px;background:#fff;color:#000;">400,00</div>
<div class="cell" style="left:1325px;top:686px;width:50px;background:#ffffe1;color:#000;">Stk</div>
<div class="cell r" style="left:1375px;top:686px;width:75px;background:#ffffe1;color:#000;">0,000</div>
<div class="cell r" style="left:1450px;top:686px;width:75px;background:#ffffe1;color:#000;">-660,00</div>
<div class="cell r" style="left:1525px;top:686px;width:74px;background:#ffffe1;color:#000;"></div>
<div class="cell" style="left:1599px;top:686px;width:96px;background:#fff;color:#000;"></div>
<div class="cell sm" style="left:1695px;top:686px;width:56px;background:#ffffe1;color:#000;font-size:11px;letter-spacing:-0.386px;">KT1001</div>
<div class="cell" style="left:1751px;top:686px;width:46px;background:#fff;color:#000;"></div>
<div class="cb" style="left:1767px;top:689px;border-color:#333"></div>
<div class="cell" style="left:1797px;top:686px;width:70px;background:#ffffe1;color:#000;"></div>
<div style="left:56px;top:707px;width:16px;height:21px;background:#efefef;border-bottom:1px solid #d9d9d9;border-left:1px solid #d9d9d9"></div>
<svg style="left:60px;top:713px" width="9" height="9" viewBox="0 0 9 9"><rect x="0.5" y="0.5" width="8" height="8" rx="1.3" fill="#f8f8f8" stroke="#8c8c8c"/><path d="M2 4.5H7M4.5 2V7" stroke="#3a4a9a" stroke-width="1"/></svg>
<div class="cell r" style="left:72px;top:707px;width:58px;background:#efefef;color:#000;">60</div>
<div class="cell" style="left:130px;top:707px;width:46px;background:#efefef;color:#000;"></div>
<div class="cb" style="left:146px;top:710px;border-color:#333"></div>
<div class="cell sm" style="left:176px;top:707px;width:100px;background:#ffffe1;color:#000;font-size:11px;letter-spacing:-0.122px;">Daniel Schuchard...</div>
<div class="cell sm" style="left:276px;top:707px;width:110px;background:#ffffe1;color:#000;font-size:11px;letter-spacing:-0.066px;">ABK 865402;ABK 8...</div>
<div class="cell" style="left:386px;top:707px;width:65px;background:#efefef;color:#e8101e;">03.07.25</div>
<div class="cell" style="left:451px;top:707px;width:65px;background:#efefef;color:#000;">26.11.25</div>
<div class="cell" style="left:516px;top:707px;width:40px;background:#ffffe1;color:#000;"></div>
<div class="cell u" style="left:556px;top:707px;width:140px;background:#efefef;color:#000;">90020</div>
<div class="cell bz" style="left:696px;top:707px;width:210px;background:#efefef;color:#000;">*Pratzenauflage LP 106x108x10*</div>
<div class="cell sm dm" style="left:906px;top:707px;width:219px;background:#ffffe1;color:#000;"></div>
<div class="cell" style="left:1125px;top:707px;width:40px;background:#f8b4a5;color:#000;"></div>
<div class="cb" style="left:1138px;top:710px;border-color:#333"></div>
<svg style="left:1138px;top:710px" width="13" height="13" viewBox="0 0 13 13"><path d="M2.5 6.5 L5.2 9.5 L10.5 3" fill="none" stroke="#333" stroke-width="1.3"/></svg>
<div class="cell" style="left:1165px;top:707px;width:40px;background:#ffffe1;color:#000;"></div>
<div class="cb" style="left:1178px;top:710px;border-color:#333"></div>
<div class="cell" style="left:1205px;top:707px;width:40px;background:#ffffe1;color:#000;"></div>
<div class="cb" style="left:1218px;top:710px;border-color:#333"></div>
<div class="cell r" style="left:1245px;top:707px;width:80px;background:#efefef;color:#000;">199,00</div>
<div class="cell" style="left:1325px;top:707px;width:50px;background:#ffffe1;color:#000;">Stk</div>
<div class="cell r" style="left:1375px;top:707px;width:75px;background:#ffffe1;color:#000;">0,000</div>
<div class="cell r" style="left:1450px;top:707px;width:75px;background:#ffffe1;color:#000;">0,00</div>
<div class="cell r" style="left:1525px;top:707px;width:74px;background:#ffffe1;color:#000;"></div>
<div class="cell" style="left:1599px;top:707px;width:96px;background:#efefef;color:#000;"></div>
<div class="cell sm" style="left:1695px;top:707px;width:56px;background:#ffffe1;color:#000;font-size:11px;letter-spacing:-0.631px;">PR1001</div>
<div class="cell" style="left:1751px;top:707px;width:46px;background:#efefef;color:#000;"></div>
<div class="cb" style="left:1767px;top:710px;border-color:#333"></div>
<div class="cell" style="left:1797px;top:707px;width:70px;background:#ffffe1;color:#000;"></div>
<div style="left:56px;top:728px;width:16px;height:21px;background:#fff;border-bottom:1px solid #d9d9d9;border-left:1px solid #d9d9d9"></div>
<svg style="left:60px;top:734px" width="9" height="9" viewBox="0 0 9 9"><rect x="0.5" y="0.5" width="8" height="8" rx="1.3" fill="#f8f8f8" stroke="#8c8c8c"/><path d="M2 4.5H7M4.5 2V7" stroke="#3a4a9a" stroke-width="1"/></svg>
<div class="cell r" style="left:72px;top:728px;width:58px;background:#fff;color:#000;">70</div>
<div class="cell" style="left:130px;top:728px;width:46px;background:#fff;color:#000;"></div>
<div class="cb" style="left:146px;top:731px;border-color:#333"></div>
<div class="cell sm" style="left:176px;top:728px;width:100px;background:#ffffe1;color:#000;font-size:11px;letter-spacing:-0.235px;">Max Mustermann ...</div>
<div class="cell sm" style="left:276px;top:728px;width:110px;background:#ffffe1;color:#000;font-size:11px;letter-spacing:-0.066px;">ABK 865577;ABK 8...</div>
<div class="cell" style="left:386px;top:728px;width:65px;background:#fff;color:#e8101e;">03.10.25</div>
<div class="cell" style="left:451px;top:728px;width:65px;background:#fff;color:#000;">26.11.25</div>
<div class="cell" style="left:516px;top:728px;width:40px;background:#ffffe1;color:#000;"></div>
<div class="cell u" style="left:556px;top:728px;width:140px;background:#fff;color:#000;">D.W.13.1100002</div>
<div class="cell bz" style="left:696px;top:728px;width:210px;background:#fff;color:#000;">*Dichtung 13 mm*</div>
<div class="cell sm dm" style="left:906px;top:728px;width:219px;background:#ffffe1;color:#000;"></div>
<div class="cell" style="left:1125px;top:728px;width:40px;background:#ffffe1;color:#000;"></div>
<div class="cb" style="left:1138px;top:731px;border-color:#333"></div>
<div class="cell" style="left:1165px;top:728px;width:40px;background:#ffffe1;color:#000;"></div>
<div class="cb" style="left:1178px;top:731px;border-color:#333"></div>
<div class="cell" style="left:1205px;top:728px;width:40px;background:#ffffe1;color:#000;"></div>
<div class="cb" style="left:1218px;top:731px;border-color:#333"></div>
<div class="cell r" style="left:1245px;top:728px;width:80px;background:#fff;color:#000;">432,00</div>
<div class="cell" style="left:1325px;top:728px;width:50px;background:#ffffe1;color:#000;">Stk</div>
<div class="cell r" style="left:1375px;top:728px;width:75px;background:#ffffe1;color:#000;">0,000</div>
<div class="cell r" style="left:1450px;top:728px;width:75px;background:#ffffe1;color:#000;">-652,00</div>
<div class="cell r" style="left:1525px;top:728px;width:74px;background:#ffffe1;color:#000;"></div>
<div class="cell" style="left:1599px;top:728px;width:96px;background:#fff;color:#000;"></div>
<div class="cell sm" style="left:1695px;top:728px;width:56px;background:#ffffe1;color:#000;font-size:11px;letter-spacing:-0.386px;">KT1001</div>
<div class="cell" style="left:1751px;top:728px;width:46px;background:#fff;color:#000;"></div>
<div class="cb" style="left:1767px;top:731px;border-color:#333"></div>
<div class="cell" style="left:1797px;top:728px;width:70px;background:#ffffe1;color:#000;"></div>
<div style="left:56px;top:749px;width:16px;height:21px;background:#efefef;border-bottom:1px solid #d9d9d9;border-left:1px solid #d9d9d9"></div>
<svg style="left:60px;top:755px" width="9" height="9" viewBox="0 0 9 9"><rect x="0.5" y="0.5" width="8" height="8" rx="1.3" fill="#f8f8f8" stroke="#8c8c8c"/><path d="M2 4.5H7M4.5 2V7" stroke="#3a4a9a" stroke-width="1"/></svg>
<div class="cell r" style="left:72px;top:749px;width:58px;background:#efefef;color:#000;">100</div>
<div class="cell" style="left:130px;top:749px;width:46px;background:#efefef;color:#000;"></div>
<div class="cb" style="left:146px;top:752px;border-color:#333"></div>
<div class="cell sm" style="left:176px;top:749px;width:100px;background:#ffffe1;color:#000;font-size:11px;letter-spacing:-0.275px;">Max Mustermann</div>
<div class="cell sm" style="left:276px;top:749px;width:110px;background:#ffffe1;color:#000;font-size:11px;letter-spacing:-0.230px;">AUFTG E AG25-00...</div>
<div class="cell" style="left:386px;top:749px;width:65px;background:#efefef;color:#e8101e;">12.05.25</div>
<div class="cell" style="left:451px;top:749px;width:65px;background:#efefef;color:#000;">26.11.25</div>
<div class="cell" style="left:516px;top:749px;width:40px;background:#ffffe1;color:#000;"></div>
<svg style="left:527px;top:752px" width="16" height="15" viewBox="0 0 16 15"><path d="M1 5.2 L6 2.4 L11 4.4 V11.2 L5.4 14.2 L1 11.6 Z" fill="#22a81a"/><path d="M1 5.2 L6 2.4 L11 4.4 L5.6 7.4 Z" fill="#5ad84a"/><path d="M5.6 7.4 L11 4.4 V11.2 L5.4 14.2 Z" fill="#128a0e"/><path d="M1 8.6 L5.5 11 L11 8" fill="none" stroke="#0c7a0a" stroke-width="0.8"/><path d="M9.2 1.6 L12.4 0.2 L15 1.6 V5.2 L12 7 L9.2 5.4 Z" fill="#26b01e"/><path d="M9.2 1.6 L12.4 0.2 L15 1.6 L12 3.2 Z" fill="#7cf060"/><path d="M12 3.2 L15 1.6 V5.2 L12 7 Z" fill="#12900e"/></svg>
<div class="cell u" style="left:556px;top:749px;width:140px;background:#efefef;color:#000;">G.PKW.A-1168534 /A</div>
<div class="cell bz" style="left:696px;top:749px;width:210px;background:#efefef;color:#000;">*Getriebe PKW*</div>
<div class="cell sm dm" style="left:906px;top:749px;width:219px;background:#ffffe1;color:#000;">550x600 mm</div>
<div class="cell" style="left:1125px;top:749px;width:40px;background:#f8b4a5;color:#000;"></div>
<div class="cb" style="left:1138px;top:752px;border-color:#333"></div>
<svg style="left:1138px;top:752px" width="13" height="13" viewBox="0 0 13 13"><path d="M2.5 6.5 L5.2 9.5 L10.5 3" fill="none" stroke="#333" stroke-width="1.3"/></svg>
<div class="cell" style="left:1165px;top:749px;width:40px;background:#ffffe1;color:#000;"></div>
<div class="cb" style="left:1178px;top:752px;border-color:#333"></div>
<div class="cell" style="left:1205px;top:749px;width:40px;background:#ffffe1;color:#000;"></div>
<div class="cb" style="left:1218px;top:752px;border-color:#333"></div>
<div class="cell r" style="left:1245px;top:749px;width:80px;background:#efefef;color:#000;">1.316,00</div>
<div class="cell" style="left:1325px;top:749px;width:50px;background:#ffffe1;color:#000;">Stk</div>
<div class="cell r" style="left:1375px;top:749px;width:75px;background:#ffffe1;color:#000;">9,000</div>
<div class="cell r" style="left:1450px;top:749px;width:75px;background:#ffffe1;color:#000;">-886,00</div>
<div class="cell r" style="left:1525px;top:749px;width:74px;background:#ffffe1;color:#000;"></div>
<div class="cell" style="left:1599px;top:749px;width:96px;background:#efefef;color:#000;"></div>
<div class="cell sm" style="left:1695px;top:749px;width:56px;background:#ffffe1;color:#000;font-size:11px;letter-spacing:-0.631px;">PR1001</div>
<div class="cell" style="left:1751px;top:749px;width:46px;background:#efefef;color:#000;"></div>
<div class="cb" style="left:1767px;top:752px;border-color:#333"></div>
<div class="cell" style="left:1797px;top:749px;width:70px;background:#ffffe1;color:#000;"></div>
<div style="left:56px;top:770px;width:16px;height:21px;background:#fff;border-bottom:1px solid #d9d9d9;border-left:1px solid #d9d9d9"></div>
<svg style="left:60px;top:776px" width="9" height="9" viewBox="0 0 9 9"><rect x="0.5" y="0.5" width="8" height="8" rx="1.3" fill="#f8f8f8" stroke="#8c8c8c"/><path d="M2 4.5H7M4.5 2V7" stroke="#3a4a9a" stroke-width="1"/></svg>
<div class="cell r" style="left:72px;top:770px;width:58px;background:#fff;color:#000;">120</div>
<div class="cell" style="left:130px;top:770px;width:46px;background:#fff;color:#000;"></div>
<div class="cb" style="left:146px;top:773px;border-color:#333"></div>
<div class="cell sm" style="left:176px;top:770px;width:100px;background:#ffffe1;color:#000;font-size:11px;letter-spacing:-0.122px;">Daniel Schuchard...</div>
<div class="cell sm" style="left:276px;top:770px;width:110px;background:#ffffe1;color:#000;font-size:11px;letter-spacing:-0.066px;">ABK 865574;ABK 8...</div>
<div class="cell" style="left:386px;top:770px;width:65px;background:#fff;color:#e8101e;">15.08.25</div>
<div class="cell" style="left:451px;top:770px;width:65px;background:#fff;color:#000;">26.11.25</div>
<div class="cell" style="left:516px;top:770px;width:40px;background:#ffffe1;color:#000;"></div>
<div class="cell u" style="left:556px;top:770px;width:140px;background:#fff;color:#000;">W.13.N-272.371 /C</div>
<div class="cell bz" style="left:696px;top:770px;width:210px;background:#fff;color:#000;">*Welle Nut C*</div>
<div class="cell sm dm" style="left:906px;top:770px;width:219px;background:#ffffe1;color:#000;">Ø13x37 mm</div>
<div class="cell" style="left:1125px;top:770px;width:40px;background:#f8b4a5;color:#000;"></div>
<div class="cb" style="left:1138px;top:773px;border-color:#333"></div>
<svg style="left:1138px;top:773px" width="13" height="13" viewBox="0 0 13 13"><path d="M2.5 6.5 L5.2 9.5 L10.5 3" fill="none" stroke="#333" stroke-width="1.3"/></svg>
<div class="cell" style="left:1165px;top:770px;width:40px;background:#ffffe1;color:#000;"></div>
<div class="cb" style="left:1178px;top:773px;border-color:#333"></div>
<div class="cell" style="left:1205px;top:770px;width:40px;background:#ffffe1;color:#000;"></div>
<div class="cb" style="left:1218px;top:773px;border-color:#333"></div>
<div class="cell r" style="left:1245px;top:770px;width:80px;background:#fff;color:#000;">4.557,00</div>
<div class="cell" style="left:1325px;top:770px;width:50px;background:#ffffe1;color:#000;">Stk</div>
<div class="cell r" style="left:1375px;top:770px;width:75px;background:#ffffe1;color:#000;">1.745,000</div>
<div class="cell r" style="left:1450px;top:770px;width:75px;background:#f8b4a5;color:#000;">3.718,00</div>
<div class="cell r" style="left:1525px;top:770px;width:74px;background:#ffffe1;color:#000;"></div>
<div class="cell" style="left:1599px;top:770px;width:96px;background:#fff;color:#000;"></div>
<div class="cell sm" style="left:1695px;top:770px;width:56px;background:#ffffe1;color:#000;font-size:11px;letter-spacing:-0.631px;">PR1001</div>
<div class="cell" style="left:1751px;top:770px;width:46px;background:#fff;color:#000;"></div>
<div class="cb" style="left:1767px;top:773px;border-color:#333"></div>
<div class="cell" style="left:1797px;top:770px;width:70px;background:#ffffe1;color:#000;"></div>
<div style="left:56px;top:791px;width:16px;height:21px;background:#efefef;border-bottom:1px solid #d9d9d9;border-left:1px solid #d9d9d9"></div>
<svg style="left:60px;top:797px" width="9" height="9" viewBox="0 0 9 9"><rect x="0.5" y="0.5" width="8" height="8" rx="1.3" fill="#f8f8f8" stroke="#8c8c8c"/><path d="M2 4.5H7M4.5 2V7" stroke="#3a4a9a" stroke-width="1"/></svg>
<div class="cell r" style="left:72px;top:791px;width:58px;background:#efefef;color:#000;">130</div>
<div class="cell" style="left:130px;top:791px;width:46px;background:#efefef;color:#000;"></div>
<div class="cb" style="left:146px;top:794px;border-color:#333"></div>
<div class="cell sm" style="left:176px;top:791px;width:100px;background:#ffffe1;color:#000;font-size:11px;letter-spacing:-0.122px;">Daniel Schuchard...</div>
<div class="cell sm" style="left:276px;top:791px;width:110px;background:#ffffe1;color:#000;font-size:11px;letter-spacing:-0.066px;">ABK 865459;ABK 8...</div>
<div class="cell" style="left:386px;top:791px;width:65px;background:#efefef;color:#e8101e;">31.10.25</div>
<div class="cell" style="left:451px;top:791px;width:65px;background:#efefef;color:#000;">28.11.25</div>
<div class="cell" style="left:516px;top:791px;width:40px;background:#ffffe1;color:#000;"></div>
<div class="cell u" style="left:556px;top:791px;width:140px;background:#efefef;color:#000;">1.2210 Ø14X1000</div>
<div class="cell bz" style="left:696px;top:791px;width:210px;background:#efefef;color:#000;">*Silberstahl Rundstange / Welle DI...</div>
<div class="cell sm dm" style="left:906px;top:791px;width:219px;background:#ffffe1;color:#000;">Ø 14x1000</div>
<div class="cell" style="left:1125px;top:791px;width:40px;background:#ffffe1;color:#000;"></div>
<div class="cb" style="left:1138px;top:794px;border-color:#333"></div>
<div class="cell" style="left:1165px;top:791px;width:40px;background:#ffffe1;color:#000;"></div>
<div class="cb" style="left:1178px;top:794px;border-color:#333"></div>
<div class="cell" style="left:1205px;top:791px;width:40px;background:#ffffe1;color:#000;"></div>
<div class="cb" style="left:1218px;top:794px;border-color:#333"></div>
<div class="cell r" style="left:1245px;top:791px;width:80px;background:#efefef;color:#000;">1.584,00</div>
<div class="cell" style="left:1325px;top:791px;width:50px;background:#ffffe1;color:#000;">m</div>
<div class="cell r" style="left:1375px;top:791px;width:75px;background:#ffffe1;color:#000;">344,000</div>
<div class="cell r" style="left:1450px;top:791px;width:75px;background:#ffffe1;color:#000;">-2.835,89</div>
<div class="cell r" style="left:1525px;top:791px;width:74px;background:#ffffe1;color:#000;"></div>
<div class="cell" style="left:1599px;top:791px;width:96px;background:#efefef;color:#000;"></div>
<div class="cell sm" style="left:1695px;top:791px;width:56px;background:#ffffe1;color:#000;font-size:11px;letter-spacing:-0.656px;">RM1001</div>
<div class="cell" style="left:1751px;top:791px;width:46px;background:#efefef;color:#000;"></div>
<div class="cb" style="left:1767px;top:794px;border-color:#333"></div>
<svg style="left:1767px;top:794px" width="13" height="13" viewBox="0 0 13 13"><path d="M2.5 6.5 L5.2 9.5 L10.5 3" fill="none" stroke="#333" stroke-width="1.3"/></svg>
<div class="cell" style="left:1797px;top:791px;width:70px;background:#ffffe1;color:#000;"></div>
<div style="left:56px;top:812px;width:16px;height:21px;background:#fff;border-bottom:1px solid #d9d9d9;border-left:1px solid #d9d9d9"></div>
<svg style="left:60px;top:818px" width="9" height="9" viewBox="0 0 9 9"><rect x="0.5" y="0.5" width="8" height="8" rx="1.3" fill="#f8f8f8" stroke="#8c8c8c"/><path d="M2 4.5H7M4.5 2V7" stroke="#3a4a9a" stroke-width="1"/></svg>
<div class="cell r" style="left:72px;top:812px;width:58px;background:#fff;color:#000;">160</div>
<div class="cell" style="left:130px;top:812px;width:46px;background:#fff;color:#000;"></div>
<div class="cb" style="left:146px;top:815px;border-color:#333"></div>
<div class="cell sm" style="left:176px;top:812px;width:100px;background:#ffffe1;color:#000;font-size:11px;letter-spacing:0.186px;">Steffen Angrick</div>
<div class="cell sm" style="left:276px;top:812px;width:110px;background:#ffffe1;color:#000;font-size:11px;letter-spacing:-0.086px;">ABK 865589</div>
<div class="cell" style="left:386px;top:812px;width:65px;background:#fff;color:#e8101e;">21.11.25</div>
<div class="cell" style="left:451px;top:812px;width:65px;background:#fff;color:#000;">05.12.25</div>
<div class="cell" style="left:516px;top:812px;width:40px;background:#ffffe1;color:#000;"></div>
<div class="cell u" style="left:556px;top:812px;width:140px;background:#fff;color:#000;">Z-21435000-L-Z64</div>
<div class="cell bz" style="left:696px;top:812px;width:210px;background:#fff;color:#000;">*Zahnrad*</div>
<div class="cell sm dm" style="left:906px;top:812px;width:219px;background:#ffffe1;color:#000;">Ø53 mm, 64 Zähne, 20 ° schräg verzahnt</div>
<div class="cell" style="left:1125px;top:812px;width:40px;background:#ffffe1;color:#000;"></div>
<div class="cb" style="left:1138px;top:815px;border-color:#333"></div>
<div class="cell" style="left:1165px;top:812px;width:40px;background:#ffffe1;color:#000;"></div>
<div class="cb" style="left:1178px;top:815px;border-color:#333"></div>
<div class="cell" style="left:1205px;top:812px;width:40px;background:#ffffe1;color:#000;"></div>
<div class="cb" style="left:1218px;top:815px;border-color:#333"></div>
<div class="cell r" style="left:1245px;top:812px;width:80px;background:#fff;color:#000;">396,00</div>
<div class="cell" style="left:1325px;top:812px;width:50px;background:#ffffe1;color:#000;">Stk</div>
<div class="cell r" style="left:1375px;top:812px;width:75px;background:#ffffe1;color:#000;">50,000</div>
<div class="cell r" style="left:1450px;top:812px;width:75px;background:#ffffe1;color:#000;">-1.140,00</div>
<div class="cell r" style="left:1525px;top:812px;width:74px;background:#ffffe1;color:#000;"></div>
<div class="cell" style="left:1599px;top:812px;width:96px;background:#fff;color:#000;"></div>
<div class="cell sm" style="left:1695px;top:812px;width:56px;background:#ffffe1;color:#000;font-size:11px;letter-spacing:-0.386px;">KT1001</div>
<div class="cell" style="left:1751px;top:812px;width:46px;background:#fff;color:#000;"></div>
<div class="cb" style="left:1767px;top:815px;border-color:#333"></div>
<div class="cell" style="left:1797px;top:812px;width:70px;background:#ffffe1;color:#000;"></div>
<svg style="left:34px;top:650px" width="6" height="9" viewBox="0 0 6 9"><path d="M0.5 0.5 L5 4.5 L0.5 8.5" fill="none" stroke="#000" stroke-width="1.1" stroke-dasharray="1.6 1"/><path d="M0.5 3.5 L2 4.5 L0.5 5.5 Z" fill="#000"/></svg>
<div style="left:57px;top:644px;width:15px;height:20px;background:#fff"></div>
<svg style="left:60px;top:650px" width="9" height="9" viewBox="0 0 9 9"><rect x="0.5" y="0.5" width="8" height="8" rx="1.3" fill="#f8f8f8" stroke="#8c8c8c"/><path d="M2 4.5H7M4.5 2V7" stroke="#3a4a9a" stroke-width="1"/></svg>
<div style="left:678px;top:646px;width:15px;height:17px;background:#e1e1e1;border:1px solid #adadad"></div>
<svg style="left:682px;top:654px" width="7" height="1" viewBox="0 0 7 1"><rect x="0" width="1" height="1" fill="#000"/><rect x="3" width="1" height="1" fill="#000"/><rect x="6" width="1" height="1" fill="#000"/></svg>
<div style="left:1358px;top:646px;width:15px;height:17px;background:#e1e1e1;border:1px solid #adadad"></div>
<svg style="left:1362px;top:654px" width="7" height="1" viewBox="0 0 7 1"><rect x="0" width="1" height="1" fill="#000"/><rect x="3" width="1" height="1" fill="#000"/><rect x="6" width="1" height="1" fill="#000"/></svg>
<div style="left:2097px;top:647px;width:15px;height:4px;background:#fff"></div>
<div style="left:2124px;top:645px;width:15px;height:6px;background:#e1e1e1;border:1px solid #adadad;border-bottom:none"></div>
<div style="left:2245px;top:645px;width:15px;height:6px;background:#e1e1e1;border:1px solid #adadad;border-bottom:none"></div>
<div class="u" style="left:2143.5px;top:645px;width:30px;height:20px;line-height:20px;color:#fff;font-size:12px;overflow:hidden">STA</div>
<div style="left:2262px;top:645px;width:69px;height:20px;line-height:20px;color:#fff;font-size:12px;text-align:right;padding-right:3px;overflow:hidden">10,00</div>
<div style="left:1912px;top:644px;width:100px;height:6px;background:#fff;border-top:1px dotted #333"></div>
<div style="left:72px;top:644px;width:2283px;height:20px;background:transparent;border-top:1px dotted #ff8a28;border-bottom:1px dotted #ff8a28;border-left:1px dotted #ff8a28"></div>
<div style="left:30px;top:1308px;width:2326px;height:26px;background:#f0f0f0;border-top:1px solid #d0d0d0;border-bottom:1px solid #b4b4b4"></div>
<div style="left:41px;top:1309px;width:1px;height:24px;background:#d0d0d0"></div>
<div style="left:44px;top:1311px;width:86px;height:21px;background:#e8eaea;border:1px solid #dcdcdc"></div>
<div style="left:44px;top:1312px;width:86px;height:21px;line-height:21px;text-align:right;padding-right:3px;font-size:12px">16</div>
<div style="left:30px;top:1334px;width:2326px;height:26px;background:#f0f0f0;border-bottom:1px solid #fff"></div>
<div style="left:35px;top:1339px;width:15px;height:15px;background:#d0484e"></div>
<svg style="left:39px;top:1343px" width="7" height="7" viewBox="0 0 7 7"><path d="M1 1 L6 6 M6 1 L1 6" stroke="#fff" stroke-width="1.4"/></svg>
<div class="cb" style="left:55px;top:1340px;border-color:#333"></div>
<svg style="left:55px;top:1340px" width="13" height="13" viewBox="0 0 13 13"><path d="M2.5 6.5 L5.2 9.5 L10.5 3" fill="none" stroke="#333" stroke-width="1.3"/></svg>
<div style="left:77px;top:1338.7px;height:17px;line-height:17px;font-size:12px">(Typ &lt;&gt; 56:Anfragen (BANF))</div>
<div style="left:241px;top:1338px;width:17px;height:17px;background:#e4e4e4;border:1px solid #9a9a9a"></div>
<svg style="left:245px;top:1344px" width="9" height="5" viewBox="0 0 9 5"><path d="M0.5 0.5 L4.5 4.5 L8.5 0.5" fill="none" stroke="#444" stroke-width="1.1"/></svg>
<div style="left:30px;top:1360px;width:2326px;height:16px;background:#f0f0f0"></div>
<div style="left:47px;top:1360px;width:1842px;height:15px;background:#cdcdcd"></div>
<svg style="left:35px;top:1363px" width="6" height="9" viewBox="0 0 6 9"><path d="M5 0.5 L1 4.5 L5 8.5" fill="none" stroke="#444" stroke-width="1.5"/></svg>
<svg style="left:2344px;top:1363px" width="6" height="9" viewBox="0 0 6 9"><path d="M1 0.5 L5 4.5 L1 8.5" fill="none" stroke="#444" stroke-width="1.5"/></svg>
<div style="left:1789px;top:650px;width:569px;height:388px;background:#fbfbfb;border:1px solid #9f9f9f"></div>
<div style="left:1790px;top:651px;width:30px;height:386px;background:#f0f0f0;border-right:1px solid #d4d4d4"></div>
<svg style="left:1798px;top:656px" width="16" height="16" viewBox="0 0 16 16"><defs><radialGradient id="wg6050" cx="0.35" cy="0.35" r="0.8"><stop offset="0" stop-color="#ffb030"/><stop offset="0.6" stop-color="#f58410"/><stop offset="1" stop-color="#c85a00"/></radialGradient></defs><path d="M8.6 0.7 C10.6 0.7 15 9 15 12 C15 14.6 11 15.6 8 15.6 C5 15.6 1 14.6 1 12 C1 9 6.6 0.7 8.6 0.7 Z" fill="url(#wg6050)" stroke="#b85200" stroke-width="0.6"/><path d="M7.6 3.8 H9.8 L9.4 10 H8 Z" fill="#1a1008"/><rect x="7.7" y="11.2" width="2" height="2" fill="#1a1008"/></svg>
<div style="left:1823px;top:655.3px;height:18px;line-height:18px;font-size:11.9px;letter-spacing:0.013px;color:#1f1f1f;">Status: Bedarfstermin unmöglich =&gt; Produktion Termin verschieben (zuständig: AVOR)</div>
<svg style="left:1798px;top:678px" width="16" height="16" viewBox="0 0 16 16"><defs><radialGradient id="wg6072" cx="0.35" cy="0.35" r="0.8"><stop offset="0" stop-color="#ffb030"/><stop offset="0.6" stop-color="#f58410"/><stop offset="1" stop-color="#c85a00"/></radialGradient></defs><path d="M8.6 0.7 C10.6 0.7 15 9 15 12 C15 14.6 11 15.6 8 15.6 C5 15.6 1 14.6 1 12 C1 9 6.6 0.7 8.6 0.7 Z" fill="url(#wg6072)" stroke="#b85200" stroke-width="0.6"/><path d="M7.6 3.8 H9.8 L9.4 10 H8 Z" fill="#1a1008"/><rect x="7.7" y="11.2" width="2" height="2" fill="#1a1008"/></svg>
<div style="left:1823px;top:677.3px;height:18px;line-height:18px;font-size:11.9px;letter-spacing:-0.010px;color:#1f1f1f;">Status: Artikel nicht zu beschaffen =&gt; in ABK austauschen mit Alternativartikel (zuständig: AVOR)</div>
<svg style="left:1798px;top:700px" width="16" height="16" viewBox="0 0 16 16"><defs><linearGradient id="bg6094" x1="0" y1="0" x2="1" y2="1"><stop offset="0" stop-color="#fff060"/><stop offset="1" stop-color="#c8a808"/></linearGradient></defs><path d="M1.6 1.6 L5.2 5.6" stroke="#9a5a12" stroke-width="2.8" stroke-linecap="round"/><path d="M3.6 7.4 L7.4 4.2 L15.4 9.6 C13 12.6 10 14.6 7.6 15.4 Z" fill="url(#bg6094)" stroke="#a88a10" stroke-width="0.7"/><path d="M3.4 7 L7.2 3.9" stroke="#d8321e" stroke-width="1.5"/></svg>
<div style="left:1823px;top:699.3px;height:18px;line-height:18px;font-size:11.9px;letter-spacing:-0.115px;color:#1f1f1f;">Status: entfernen</div>
<div class="sep" style="top:721px"></div>
<svg style="left:1798px;top:728px" width="16" height="16" viewBox="0 0 16 16"><defs><radialGradient id="eg6122" cx="0.4" cy="0.3" r="0.8"><stop offset="0" stop-color="#fff27a"/><stop offset="0.5" stop-color="#fbc814"/><stop offset="1" stop-color="#c88a00"/></radialGradient></defs><circle cx="8" cy="8" r="7.2" fill="url(#eg6122)" stroke="#c08a00" stroke-width="0.6"/><circle cx="8" cy="8" r="5" fill="none" stroke="#f0b000" stroke-width="1"/><text x="7.8" y="11.6" font-size="10" font-weight="bold" fill="#fff" text-anchor="middle" font-family="Liberation Sans,sans-serif">€</text></svg>
<div style="left:1823px;top:727.3px;height:18px;line-height:18px;font-size:11.9px;letter-spacing:-0.038px;color:#1f1f1f;">Automatischer Preisvorschlag</div>
<svg style="left:1798px;top:750px" width="16" height="16" viewBox="0 0 16 16"><defs><radialGradient id="eg6144" cx="0.4" cy="0.3" r="0.8"><stop offset="0" stop-color="#fff27a"/><stop offset="0.5" stop-color="#fbc814"/><stop offset="1" stop-color="#c88a00"/></radialGradient></defs><circle cx="8" cy="8" r="7.2" fill="url(#eg6144)" stroke="#c08a00" stroke-width="0.6"/><circle cx="8" cy="8" r="5" fill="none" stroke="#f0b000" stroke-width="1"/><text x="7.8" y="11.6" font-size="10" font-weight="bold" fill="#fff" text-anchor="middle" font-family="Liberation Sans,sans-serif">€</text></svg>
<div style="left:1823px;top:749.3px;height:18px;line-height:18px;font-size:11.9px;letter-spacing:-0.085px;color:#1f1f1f;">Preisübersicht</div>
<div class="sep" style="top:771px"></div>
<svg style="left:1798px;top:778px" width="16" height="16" viewBox="0 0 16 16"><defs><linearGradient id="cg6172" x1="0" y1="0" x2="1" y2="1"><stop offset="0" stop-color="#ececff"/><stop offset="1" stop-color="#a4a4dc"/></linearGradient></defs><path d="M8.5 2.2 C10.5 0.6 13 0.8 13.5 3.2" fill="none" stroke="#9a9a9a" stroke-width="1.5"/><path d="M2 4.5 L12.5 3 L13.2 10 L4.2 12 Z" fill="url(#cg6172)" stroke="#9a9acc" stroke-width="0.7"/><path d="M4.3 12.5 L3.8 14.5 M12.6 10.8 L12.8 13 M4.3 13.2 L12.6 11.6" stroke="#8e8e8e" stroke-width="1.3"/><ellipse cx="4" cy="15" rx="1.8" ry="1" fill="#555"/><ellipse cx="7.6" cy="14.3" rx="1.4" ry="0.9" fill="#666"/><ellipse cx="12.8" cy="13.6" rx="1.6" ry="1" fill="#555"/><path d="M11.3 7.8 V14.6 M7.9 11.2 H14.7" stroke="#0b6b0b" stroke-width="3.4"/><path d="M11.3 8.6 V13.8 M8.7 11.2 H13.9" stroke="#52dc3c" stroke-width="1.7"/></svg>
<div style="left:1823px;top:777.3px;height:18px;line-height:18px;font-size:11.9px;letter-spacing:-0.168px;color:#1f1f1f;">Bestellung auslösen</div>
<svg style="left:1798px;top:800px" width="16" height="16" viewBox="0 0 16 16"><defs><linearGradient id="cg6194" x1="0" y1="0" x2="1" y2="1"><stop offset="0" stop-color="#ececff"/><stop offset="1" stop-color="#a4a4dc"/></linearGradient></defs><path d="M8.5 2.2 C10.5 0.6 13 0.8 13.5 3.2" fill="none" stroke="#9a9a9a" stroke-width="1.5"/><path d="M2 4.5 L12.5 3 L13.2 10 L4.2 12 Z" fill="url(#cg6194)" stroke="#9a9acc" stroke-width="0.7"/><path d="M4.3 12.5 L3.8 14.5 M12.6 10.8 L12.8 13 M4.3 13.2 L12.6 11.6" stroke="#8e8e8e" stroke-width="1.3"/><ellipse cx="4" cy="15" rx="1.8" ry="1" fill="#555"/><ellipse cx="7.6" cy="14.3" rx="1.4" ry="0.9" fill="#666"/><ellipse cx="12.8" cy="13.6" rx="1.6" ry="1" fill="#555"/><path d="M11.3 7.8 V14.6 M7.9 11.2 H14.7" stroke="#0b6b0b" stroke-width="3.4"/><path d="M11.3 8.6 V13.8 M8.7 11.2 H13.9" stroke="#52dc3c" stroke-width="1.7"/></svg>
<div style="left:1823px;top:799.3px;height:18px;line-height:18px;font-size:11.9px;letter-spacing:0.007px;color:#1f1f1f;">Position anhängen</div>
<div class="sep" style="top:821px"></div>
<svg style="left:1798px;top:828px" width="16" height="16" viewBox="0 0 16 16"><defs><linearGradient id="cg6222" x1="0" y1="0" x2="1" y2="1"><stop offset="0" stop-color="#ececff"/><stop offset="1" stop-color="#a4a4dc"/></linearGradient></defs><path d="M8.5 2.2 C10.5 0.6 13 0.8 13.5 3.2" fill="none" stroke="#9a9a9a" stroke-width="1.5"/><path d="M2 4.5 L12.5 3 L13.2 10 L4.2 12 Z" fill="url(#cg6222)" stroke="#9a9acc" stroke-width="0.7"/><path d="M4.3 12.5 L3.8 14.5 M12.6 10.8 L12.8 13 M4.3 13.2 L12.6 11.6" stroke="#8e8e8e" stroke-width="1.3"/><ellipse cx="4" cy="15" rx="1.8" ry="1" fill="#555"/><ellipse cx="7.6" cy="14.3" rx="1.4" ry="0.9" fill="#666"/><ellipse cx="12.8" cy="13.6" rx="1.6" ry="1" fill="#555"/></svg>
<div style="left:1823px;top:827.3px;height:18px;line-height:18px;font-size:11.9px;letter-spacing:-0.070px;color:#1f1f1f;">Neue Anfrage erstellen</div>
<svg style="left:1798px;top:850px" width="16" height="16" viewBox="0 0 16 16"><defs><linearGradient id="cg6244" x1="0" y1="0" x2="1" y2="1"><stop offset="0" stop-color="#ececff"/><stop offset="1" stop-color="#a4a4dc"/></linearGradient></defs><path d="M8.5 2.2 C10.5 0.6 13 0.8 13.5 3.2" fill="none" stroke="#9a9a9a" stroke-width="1.5"/><path d="M2 4.5 L12.5 3 L13.2 10 L4.2 12 Z" fill="url(#cg6244)" stroke="#9a9acc" stroke-width="0.7"/><path d="M4.3 12.5 L3.8 14.5 M12.6 10.8 L12.8 13 M4.3 13.2 L12.6 11.6" stroke="#8e8e8e" stroke-width="1.3"/><ellipse cx="4" cy="15" rx="1.8" ry="1" fill="#555"/><ellipse cx="7.6" cy="14.3" rx="1.4" ry="0.9" fill="#666"/><ellipse cx="12.8" cy="13.6" rx="1.6" ry="1" fill="#555"/></svg>
<div style="left:1823px;top:849.3px;height:18px;line-height:18px;font-size:11.9px;letter-spacing:0.031px;color:#1f1f1f;">An Anfrage anhängen</div>
<div class="sep" style="top:871px"></div>
<svg style="left:1798px;top:878px" width="16" height="16" viewBox="0 0 16 16"><defs><linearGradient id="bg6272" x1="0" y1="0" x2="1" y2="1"><stop offset="0" stop-color="#fff060"/><stop offset="1" stop-color="#c8a808"/></linearGradient></defs><path d="M1.6 1.6 L5.2 5.6" stroke="#9a5a12" stroke-width="2.8" stroke-linecap="round"/><path d="M3.6 7.4 L7.4 4.2 L15.4 9.6 C13 12.6 10 14.6 7.6 15.4 Z" fill="url(#bg6272)" stroke="#a88a10" stroke-width="0.7"/><path d="M3.4 7 L7.2 3.9" stroke="#d8321e" stroke-width="1.5"/></svg>
<div style="left:1823px;top:877.3px;height:18px;line-height:18px;font-size:11.9px;letter-spacing:-0.011px;color:#1f1f1f;">Lieferant entfernen</div>
<div style="left:1793px;top:898px;width:562px;height:19px;border:1px solid #c4c4c4;border-radius:2px;background:linear-gradient(#f4f4f4 0%,#e6e6e6 55%,#d8d8d8 60%,#e8e8e8 100%)"></div>
<svg style="left:1797px;top:899px" width="18" height="18" viewBox="0 0 18 18"><rect x="0.5" y="1.5" width="4.5" height="4.5" fill="#c4c4c4" stroke="#a4a4a4" stroke-width="0.8"/><rect x="6.5" y="6.5" width="5" height="5" fill="#9c9c9c"/><rect x="12" y="12" width="4.5" height="4.5" fill="#b4b4b4" stroke="#a4a4a4" stroke-width="0.8"/><path d="M6.5 3.5 H14 M9.5 1 L7 3.5 L9.5 6" fill="none" stroke="#a0a0a0" stroke-width="1.2"/><path d="M9 11.5 V14.5 H12" fill="none" stroke="#a0a0a0" stroke-width="1.2"/></svg>
<div style="left:1823px;top:899.3px;height:18px;line-height:18px;font-size:11.9px;letter-spacing:0.077px;color:#8a8a8a;">Markierte Zellen mit dem fokusierten Wert auffüllen</div>
<div class="sep" style="top:921px"></div>
<svg style="left:1800px;top:931px" width="11" height="11" viewBox="0 0 11 11"><path d="M1 0.5 L10 5.5 L1 10.5 Z" fill="#1a7fe8" stroke="#0b5fc0" stroke-width="0.8"/></svg>
<div style="left:1823px;top:927.3px;height:18px;line-height:18px;font-size:11.9px;letter-spacing:-0.168px;color:#1f1f1f;">Adressverwaltung  (STA)</div>
<svg style="left:1800px;top:953px" width="11" height="11" viewBox="0 0 11 11"><path d="M1 0.5 L10 5.5 L1 10.5 Z" fill="#1a7fe8" stroke="#0b5fc0" stroke-width="0.8"/></svg>
<div style="left:1823px;top:949.3px;height:18px;line-height:18px;font-size:11.9px;letter-spacing:-0.107px;color:#1f1f1f;">Artikelverwaltung  (000051.1)</div>
<svg style="left:1800px;top:975px" width="11" height="11" viewBox="0 0 11 11"><path d="M1 0.5 L10 5.5 L1 10.5 Z" fill="#1a7fe8" stroke="#0b5fc0" stroke-width="0.8"/></svg>
<div style="left:1823px;top:971.3px;height:18px;line-height:18px;font-size:11.9px;letter-spacing:-0.272px;color:#1f1f1f;">Bestellvorschläge  (2500078)</div>
<svg style="left:1800px;top:997px" width="11" height="11" viewBox="0 0 11 11"><path d="M1 0.5 L10 5.5 L1 10.5 Z" fill="#1a7fe8" stroke="#0b5fc0" stroke-width="0.8"/></svg>
<div style="left:1823px;top:993.3px;height:18px;line-height:18px;font-size:11.9px;letter-spacing:0.015px;color:#1f1f1f;">Einkauf [neu anlegen / unvollständige Parameter]</div>
<svg style="left:1798px;top:1016px" width="16" height="16" viewBox="0 0 16 16"><path d="M1 3.5 H6 L7.5 5 H13.5 V13.5 H1 Z" fill="#f2c84a" stroke="#b78a12" stroke-width="0.9"/><path d="M1 13.5 L3.2 7 H15.4 L13.5 13.5 Z" fill="#fbe08a" stroke="#b78a12" stroke-width="0.9"/></svg>
<div style="left:1823px;top:1015.3px;height:18px;line-height:18px;font-size:11.9px;letter-spacing:0.056px;color:#1f1f1f;">Unbenutzt</div>
<svg style="left:2346px;top:782px" width="5" height="8" viewBox="0 0 5 8"><path d="M0 0 L4.5 4 L0 8 Z" fill="#222"/></svg>
<svg style="left:2346px;top:1020px" width="5" height="8" viewBox="0 0 5 8"><path d="M0 0 L4.5 4 L0 8 Z" fill="#222"/></svg>
<div style="left:27px;top:350px;width:2px;height:1051px;background:linear-gradient(to right,#c8c9d8,#ececf2)"></div>
<div style="left:0px;top:897px;width:6px;height:190px;background:#005a8e;border:1px solid #0a1a2a;border-left:none;border-radius:0 3px 3px 0;box-shadow:2px 2px 3px rgba(0,0,0,0.35)"></div>
<svg style="left:0px;top:989px" width="2" height="8" viewBox="0 0 2 8"><path d="M0 1H2M0 4H2M0 7H2" stroke="#fff" stroke-width="1.4"/></svg>
<div style="left:2px;top:1320px;width:22px;height:21px;background:#d6d6d6;border:1px solid #e8e8e8;border-right-color:#8c8c8c;border-bottom-color:#8c8c8c"></div>
<div style="left:2px;top:1353px;width:22px;height:21px;background:#d6d6d6;border:1px solid #e8e8e8;border-right-color:#8c8c8c;border-bottom-color:#8c8c8c"></div>
<div style="left:2px;top:1377px;width:22px;height:21px;background:#d6d6d6;border:1px solid #e8e8e8;border-right-color:#8c8c8c;border-bottom-color:#8c8c8c"></div>
<div style="left:3px;top:1346px;width:20px;height:2px;background:#f4f4f4;border-bottom:1px solid #999"></div>
<svg style="left:4px;top:1322px" width="18" height="18" viewBox="0 0 18 18"><path d="M5 1 H14 C16 1 16 3.5 14 3.5 H12 L10 13 H2 C0 13 0 10.5 2 10.5 H3 Z" fill="#f0f0f8" stroke="#9a9ab8" stroke-width="0.8"/><path d="M13 10V17M9.5 13.5H16.5" stroke="#0a7a0a" stroke-width="3.4"/><path d="M13 10.8V16.2M10.3 13.5H15.7" stroke="#4ee04e" stroke-width="1.5"/></svg>
<svg style="left:7px;top:1356px" width="12" height="15" viewBox="0 0 12 15"><rect x="0.5" y="0.5" width="11" height="14" fill="#fff" stroke="#8a8ab0"/><path d="M2 2.5H10M2 4.5H10M2 6.5H10M2 8.5H10" stroke="#7aa0e0" stroke-width="0.7"/><rect x="2" y="10.5" width="8" height="2.5" fill="#3a78c8"/></svg>
<svg style="left:6px;top:1380px" width="15" height="15" viewBox="0 0 15 15"><defs><radialGradient id="rg1" cx="0.4" cy="0.3" r="0.8"><stop offset="0" stop-color="#ff9a7a"/><stop offset="0.5" stop-color="#f02a10"/><stop offset="1" stop-color="#c01000"/></radialGradient></defs><path d="M4.5 0.5 H10.5 L14.5 4.5 V10.5 L10.5 14.5 H4.5 L0.5 10.5 V4.5 Z" fill="url(#rg1)"/></svg>
<div style="left:27px;top:1377px;width:2333px;height:24px;background:#f0f0f0"></div>
<div style="left:27px;top:1382px;width:2333px;height:1px;background:#b4b4b4"></div>
<div style="left:27px;top:1382px;width:61px;height:19px;border:1px solid #a8a8a8;border-right-color:#fff;border-bottom:none"></div>
<div style="left:91px;top:1382px;width:176px;height:19px;border:1px solid #a8a8a8;border-right-color:#fff;border-bottom:none"></div>
<div style="left:270px;top:1382px;width:80px;height:19px;border:1px solid #a8a8a8;border-right-color:#fff;border-bottom:none"></div>
<div style="left:353px;top:1382px;width:176px;height:19px;border:1px solid #a8a8a8;border-right-color:#fff;border-bottom:none"></div>
<div style="left:532px;top:1382px;width:104px;height:19px;border:1px solid #a8a8a8;border-right-color:#fff;border-bottom:none"></div>
<div style="left:727px;top:1382px;width:76px;height:19px;border:1px solid #a8a8a8;border-right-color:#fff;border-bottom:none"></div>
<div style="left:806px;top:1382px;width:99px;height:19px;border:1px solid #a8a8a8;border-right-color:#fff;border-bottom:none"></div>
<div style="left:908px;top:1382px;width:100px;height:19px;border:1px solid #a8a8a8;border-right-color:#fff;border-bottom:none"></div>
<div style="left:1011px;top:1382px;width:101px;height:19px;border:1px solid #a8a8a8;border-right-color:#fff;border-bottom:none"></div>
<div style="left:1115px;top:1382px;width:1247px;height:19px;border:1px solid #a8a8a8;border-right-color:#fff;border-bottom:none"></div>
<div style="left:49px;top:1382px;height:18px;line-height:18px;font-size:11.8px;letter-spacing:-0.743px;">Erstellt:</div>
<div style="left:94px;top:1382px;height:18px;line-height:18px;font-size:11.8px;letter-spacing:-0.008px;">2025-11-26  Steffen Angrick</div>
<div style="left:283px;top:1382px;height:18px;line-height:18px;font-size:11.8px;letter-spacing:-0.107px;">Bearbeitet:</div>
<div style="left:356px;top:1382px;height:18px;line-height:18px;font-size:11.8px;letter-spacing:-0.008px;">2025-11-26  Steffen Angrick</div>
<div style="left:551px;top:1382px;height:18px;line-height:18px;font-size:11.8px;letter-spacing:-0.066px;">Wiedervorlage:</div>
<div style="left:640px;top:1384px;width:83px;height:14px;background:linear-gradient(#fff,#e4e8f0);border:1px solid #8a8a8a;border-radius:2px"></div>
<div class="st c u" style="left:640px;width:83px;top:1380px;font-size:11px">**</div>
<div class="u" style="left:738px;top:1382.5px;height:18px;line-height:18px;font-size:11.8px;letter-spacing:0.317px;color:#0000ff;">Dokument</div>
<div class="u" style="left:834px;top:1382.5px;height:18px;line-height:18px;font-size:11.8px;letter-spacing:0.165px;color:#0000ff;">Notizen</div>
<div class="u" style="left:919px;top:1382.5px;height:18px;line-height:18px;font-size:11.8px;letter-spacing:-0.066px;color:#ff0000;">Eigenschaften</div>
<div class="u" style="left:1040px;top:1382.5px;height:18px;line-height:18px;font-size:11.8px;letter-spacing:0.186px;color:#ff0000;">Softlink</div>
<div style="left:0px;top:1400px;width:2360px;height:40px;background:#101010"></div>
<div style="left:0px;top:1412px;width:1px;height:16px;background:#f0d860"></div>
<div style="left:114px;top:1400px;width:48px;height:40px;background:#333"></div>
<div style="left:20px;top:1438px;width:40px;height:2px;background:#76b9ed"></div>
<div style="left:114px;top:1438px;width:48px;height:2px;background:#76b9ed"></div>
<svg style="left:28px;top:1407px" width="24" height="25" viewBox="0 0 24 25"><defs><radialGradient id="ff1" cx="0.6" cy="0.2" r="0.9"><stop offset="0" stop-color="#ffe14a"/><stop offset="0.45" stop-color="#ff7a1a"/><stop offset="1" stop-color="#e0207a"/></radialGradient></defs><path d="M12 4 C14 2 15 1 15.5 0 C17 2 18 3 19.5 5 C22 7 23.5 10 23.5 13.5 C23.5 19.5 18.5 24 12 24 C5.5 24 0.5 19.5 0.5 13.5 C0.5 10 2 7 4 5.5 C4.5 7 5 7.5 6 8 C7 5.5 9.5 4.2 12 4 Z" fill="url(#ff1)"/><circle cx="11.5" cy="14" r="5" fill="#6a3ad8"/><path d="M6 11 C9 9 13 10 15 13 C12 12.5 9 13 7 15 Z" fill="#ff9a2a"/></svg>
<svg style="left:77px;top:1408px" width="24" height="23" viewBox="0 0 24 23"><rect x="10" y="6" width="13" height="11" fill="#fff"/><path d="M10 6 L16.5 12 L23 6" fill="none" stroke="#0a6ac8" stroke-width="1.3"/><path d="M0.5 3 L14 0.5 V22.5 L0.5 20 Z" fill="#0a6ac8"/><ellipse cx="7" cy="11.5" rx="3.2" ry="3.8" fill="none" stroke="#fff" stroke-width="1.8"/></svg>
<svg style="left:126px;top:1410.5px" width="24" height="19" viewBox="0 0 24 19"><defs><linearGradient id="orl2" x1="0" y1="0" x2="1" y2="0"><stop offset="0" stop-color="#1874a8"/><stop offset="0.22" stop-color="#1e9ad4"/></linearGradient></defs><rect x="0" y="0" width="24" height="19" rx="4.5" fill="url(#orl2)"/><rect x="6" y="2.6" width="15.8" height="13.8" rx="2" fill="#fff"/><path d="M9.2 2 H13.6 C14.5 5.5 17.5 8 20.5 9.5 C17.5 11 14.5 13.5 13.6 17 H9.2 C10.4 13.3 12.8 11 15.6 9.5 C12.8 8 10.4 5.7 9.2 2 Z" fill="#1e9ad4"/></svg>
<div style="left:2115px;top:1412px;width:1px;height:16px;background:#4a4a4a"></div>
<div style="left:2118px;top:1412px;width:1px;height:16px;background:#4a4a4a"></div>
<div style="left:2129.5px;top:1410.5px;height:18px;line-height:18px;font-size:11.8px;letter-spacing:-0.131px;color:#e8e8e8;">Desktop</div>
<svg style="left:2180px;top:1406.5px" width="8" height="6" viewBox="0 0 8 6"><path d="M0.5 0.5 L3.2 3 L0.5 5.5 M4.2 0.5 L7 3 L4.2 5.5" fill="none" stroke="#fff" stroke-width="1.3"/></svg>
<svg style="left:2199px;top:1416px" width="13" height="8" viewBox="0 0 13 8"><path d="M0.7 7 L6.5 1 L12.3 7" fill="none" stroke="#fff" stroke-width="1.3"/></svg>
<svg style="left:2221px;top:1413.5px" width="17" height="14" viewBox="0 0 17 14"><rect x="3.5" y="1.5" width="12" height="8" fill="none" stroke="#fff" stroke-width="1"/><path d="M9.5 9.5V12.5M6 12.5H13" stroke="#fff" stroke-width="1"/><rect x="0.5" y="0.5" width="5" height="4" fill="#101010" stroke="#fff" stroke-width="1"/></svg>
<div style="left:2260px;top:1402px;height:18px;line-height:18px;font-size:11.8px;letter-spacing:-0.663px;color:#fff;">17:11</div>
<div style="left:2247px;top:1420px;height:18px;line-height:18px;font-size:11.8px;letter-spacing:-0.498px;color:#fff;">26.11.2025</div>
<svg style="left:2319px;top:1411.5px" width="17" height="17" viewBox="0 0 17 17"><path d="M0.5 0.5 H15.5 V11.5 H10 L7 14.5 V11.5 H0.5 Z" fill="#fff"/><path d="M3 3.5H13M3 6H13M3 8.5H10" stroke="#101010" stroke-width="1"/><circle cx="13.5" cy="12.5" r="3" fill="#101010" stroke="#fff" stroke-width="0.9"/></svg>
<div style="left:2355px;top:1400px;width:1px;height:40px;background:#444"></div>
</body></html>
